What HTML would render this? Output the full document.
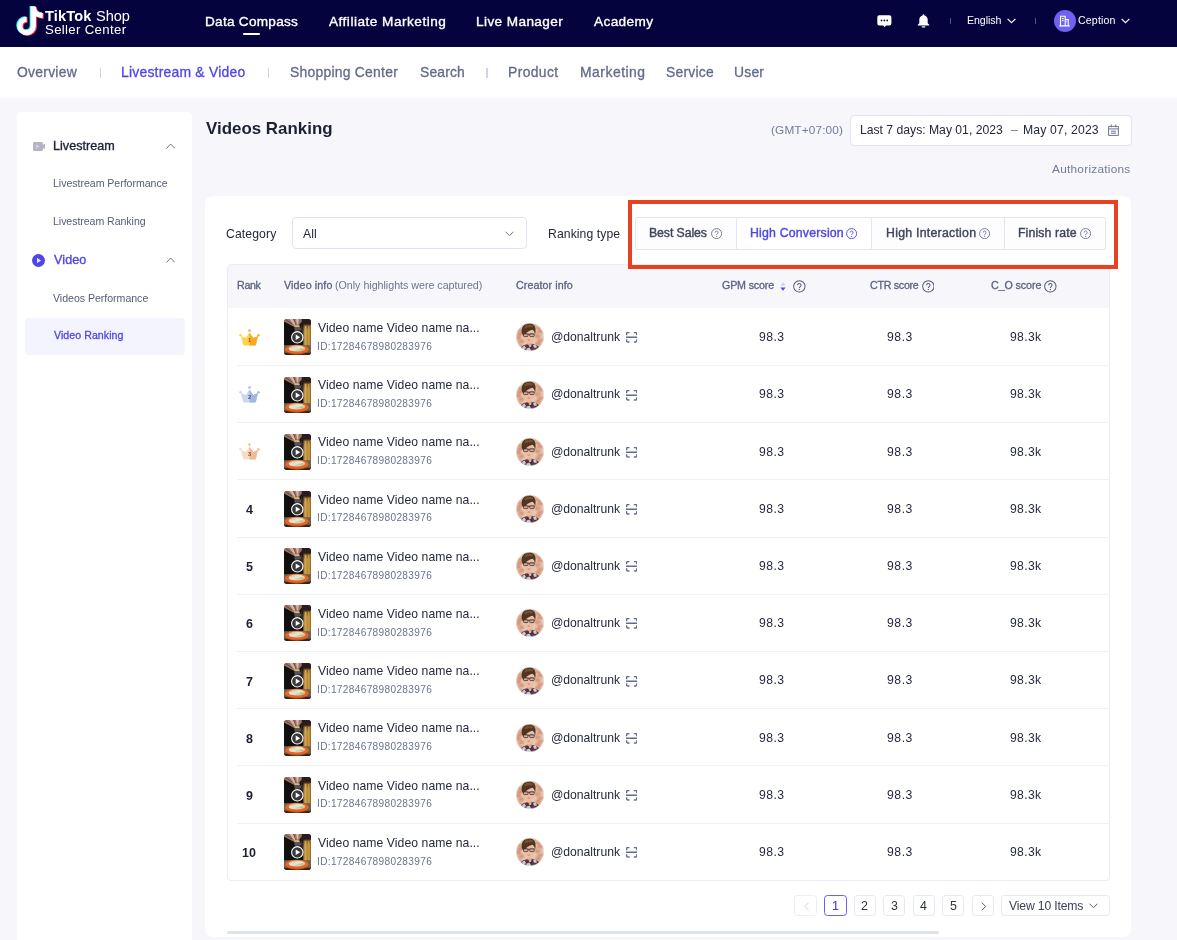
<!DOCTYPE html>
<html lang="en">
<head>
<meta charset="utf-8">
<title>Videos Ranking</title>
<style>
*{box-sizing:border-box;margin:0;padding:0}
html,body{width:1177px;height:940px;overflow:hidden}
body{background:#f6f6fb;font-family:"Liberation Sans",sans-serif;color:#25283a;position:relative}
.a{position:absolute}
.t{position:absolute;white-space:nowrap;line-height:20px;will-change:transform}
svg{display:block}
.pb{position:absolute;top:894.500px;width:22.300px;height:21.500px;border:1px solid #e6e8f2;border-radius:3.500px;background:#fff}
</style>
</head>
<body>
<div class="a" style="left:0;top:0;width:1177px;height:47.300px;background:#05033d"></div>
<svg class="a" style="left:15px;top:4px" width="32" height="34" viewBox="0 0 32 34">
<g fill="none" stroke-width="5.300">
<g stroke="#25f4ee" transform="translate(-1,-0.700)"><path d="M18.300 2.600V22a6.700 6.700 0 1 1-6.700-6.700"/><path d="M18.300 3.500c.6 4.800 4 7.800 9.400 8.200"/></g>
<g stroke="#fe2c55" transform="translate(1,0.700)"><path d="M18.300 2.600V22a6.700 6.700 0 1 1-6.700-6.700"/><path d="M18.300 3.500c.6 4.800 4 7.800 9.400 8.200"/></g>
<g stroke="#fff"><path d="M18.300 2.600V22a6.700 6.700 0 1 1-6.700-6.700"/><path d="M18.300 3.500c.6 4.800 4 7.800 9.400 8.200"/></g>
</g></svg>
<div class="t" style="left:45.14px;top:6px;font-size:14.6px;color:#fff;letter-spacing:0.13px;font-weight:bold;">TikTok</div>
<div class="t" style="left:95.84px;top:6px;font-size:14.6px;color:#fff;letter-spacing:-0.08px;">Shop</div>
<div class="t" style="left:44.71px;top:20px;font-size:13.2px;color:#fff;letter-spacing:0.34px;">Seller Center</div>
<div class="t" style="left:204.56px;top:12px;font-size:13.6px;color:#fff;letter-spacing:0.27px;-webkit-text-stroke:0.35px #fff;">Data Compass</div>
<div class="t" style="left:329.35px;top:12px;font-size:13.6px;color:#fff;letter-spacing:0.5px;-webkit-text-stroke:0.35px #fff;">Affiliate Marketing</div>
<div class="t" style="left:475.96px;top:12px;font-size:13.6px;color:#fff;letter-spacing:0.4px;-webkit-text-stroke:0.35px #fff;">Live Manager</div>
<div class="t" style="left:594.15px;top:12px;font-size:13.6px;color:#fff;letter-spacing:0.4px;-webkit-text-stroke:0.35px #fff;">Academy</div>
<div class="a" style="left:243.400px;top:32.700px;width:17px;height:2.200px;background:#fff;border-radius:1px"></div>
<svg class="a" style="left:877px;top:14.500px" width="15" height="13" viewBox="0 0 15 13"><path d="M2.300.3h10.100a2 2 0 0 1 2 2v6.200a2 2 0 0 1-2 2H9l-1.400 1.700L6.200 10.500H2.300a2 2 0 0 1-2-2V2.300a2 2 0 0 1 2-2z" fill="#fff"/><circle cx="4.500" cy="5.400" r=".85" fill="#05033d"/><circle cx="7.350" cy="5.400" r=".85" fill="#05033d"/><circle cx="10.200" cy="5.400" r=".85" fill="#05033d"/></svg>
<svg class="a" style="left:917px;top:13.800px" width="13" height="14" viewBox="0 0 13 14"><path d="M6.500.2c-.5 0-.9.400-.9.900v.4C3.600 2 2.300 3.700 2.300 5.800v3.400L.8 10.700v.8h11.400v-.8L10.700 9.200V5.800c0-2.100-1.300-3.800-3.300-4.300v-.4c0-.5-.4-.9-.9-.9z" fill="#fff"/><rect x="4.700" y="12.300" width="3.600" height="1.300" rx=".65" fill="#fff"/></svg>
<div class="a" style="left:949.700px;top:18.300px;width:1px;height:5.500px;background:#55537f"></div>
<div class="t" style="left:967.43px;top:10px;font-size:10.6px;color:#fff;letter-spacing:-0.05px;">English</div>
<svg class="a" style="left:1006.5px;top:18.300px" width="9" height="6" viewBox="0 0 9 6"><path d="M.6.800l3.900 3.900L8.400.8" fill="none" stroke="#fff" stroke-width="1.150"/></svg>
<div class="a" style="left:1034.700px;top:18.300px;width:1px;height:5.500px;background:#55537f"></div>
<div class="a" style="left:1053.600px;top:9.700px;width:22px;height:22px;border-radius:50%;background:#6f62f2"></div>
<svg class="a" style="left:1059px;top:15px" width="11" height="12" viewBox="0 0 11 12"><path d="M1.500 10.800V1.300h4.700v9.500M6.200 4.600h3v6.200M.3 10.900h10.400" fill="none" stroke="#fff" stroke-width="1.100"/><path d="M3 3.500h1.700M3 5.600h1.700M7.300 6.800h.8" stroke="#fff" stroke-width="1"/></svg>
<div class="t" style="left:1078.27px;top:10px;font-size:10.6px;color:#fff;letter-spacing:0.16px;">Ception</div>
<svg class="a" style="left:1120.7px;top:18.300px" width="9" height="6" viewBox="0 0 9 6"><path d="M.6.800l3.900 3.900L8.400.8" fill="none" stroke="#fff" stroke-width="1.150"/></svg>
<div class="a" style="left:0;top:47.300px;width:1177px;height:50.600px;background:#fff"></div>
<div class="t" style="left:17.3px;top:62px;font-size:13.9px;color:#616b8a;letter-spacing:0.26px;-webkit-text-stroke:0.3px #616b8a;">Overview</div>
<div class="t" style="left:121.41px;top:62px;font-size:13.9px;color:#4f46e5;letter-spacing:0.23px;-webkit-text-stroke:0.3px #4f46e5;">Livestream &amp; Video</div>
<div class="t" style="left:289.82px;top:62px;font-size:13.9px;color:#616b8a;letter-spacing:0.25px;-webkit-text-stroke:0.3px #616b8a;">Shopping Center</div>
<div class="t" style="left:420.12px;top:62px;font-size:13.9px;color:#616b8a;letter-spacing:0.14px;-webkit-text-stroke:0.3px #616b8a;">Search</div>
<div class="t" style="left:508.21px;top:62px;font-size:13.9px;color:#616b8a;letter-spacing:0.37px;-webkit-text-stroke:0.3px #616b8a;">Product</div>
<div class="t" style="left:579.51px;top:62px;font-size:13.9px;color:#616b8a;letter-spacing:0.51px;-webkit-text-stroke:0.3px #616b8a;">Marketing</div>
<div class="t" style="left:665.82px;top:62px;font-size:13.9px;color:#616b8a;letter-spacing:0.22px;-webkit-text-stroke:0.3px #616b8a;">Service</div>
<div class="t" style="left:734.48px;top:62px;font-size:13.9px;color:#616b8a;letter-spacing:0.22px;-webkit-text-stroke:0.3px #616b8a;">User</div>
<div class="a" style="left:99.8px;top:67.800px;width:1.400px;height:9.800px;background:#d2d5e2"></div>
<div class="a" style="left:267.6px;top:67.800px;width:1.400px;height:9.800px;background:#d2d5e2"></div>
<div class="a" style="left:486.3px;top:67.800px;width:1.400px;height:9.800px;background:#d2d5e2"></div>
<div class="a" style="left:17.300px;top:111.800px;width:174.500px;height:840px;background:#fff;border-radius:4px"></div>
<svg class="a" style="left:33.300px;top:141.500px" width="12.200" height="9" viewBox="0 0 12.200 9"><rect x="0" y="0" width="10" height="8.900" rx="1.500" fill="#b5b4c0"/><path d="M9.800 3l2.400-1.300v5.500L9.800 5.900z" fill="#b5b4c0"/><path d="M3.200 2.500v3.900l3.400-1.950z" fill="#d2d3ff"/></svg>
<div class="t" style="left:52.64px;top:136px;font-size:12.6px;color:#1f2235;letter-spacing:0.01px;-webkit-text-stroke:0.35px #1f2235;">Livestream</div>
<svg class="a" style="left:165.500px;top:143px" width="9.400" height="6.200" viewBox="0 0 9.400 6.200"><path d="M.5 5.500l4.200-4.500 4.200 4.500" fill="none" stroke="#6d7691" stroke-width="1"/></svg>
<div class="t" style="left:52.63px;top:173px;font-size:10.6px;color:#555d75;letter-spacing:-0.04px;">Livestream Performance</div>
<div class="t" style="left:52.63px;top:211px;font-size:10.6px;color:#555d75;letter-spacing:-0.06px;">Livestream Ranking</div>
<svg class="a" style="left:32.400px;top:253.800px" width="13" height="13" viewBox="0 0 13 13"><circle cx="6.500" cy="6.500" r="6.500" fill="#4f46e5"/><path d="M5 4.100v4.800l3.900-2.400z" fill="#fff"/><path d="M5 4.100v4.800l3.900-2.400z" fill="#d6d6fb" opacity=".6"/></svg>
<div class="t" style="left:53.62px;top:250px;font-size:12.6px;color:#4f46e5;letter-spacing:0.08px;-webkit-text-stroke:0.35px #4f46e5;">Video</div>
<svg class="a" style="left:165.500px;top:257.4px" width="9.400" height="6.200" viewBox="0 0 9.400 6.200"><path d="M.5 5.500l4.200-4.500 4.200 4.500" fill="none" stroke="#6d7691" stroke-width="1"/></svg>
<div class="t" style="left:53.46px;top:288px;font-size:10.6px;color:#555d75;letter-spacing:-0.03px;">Videos Performance</div>
<div class="a" style="left:25px;top:317.900px;width:159.500px;height:36.900px;background:#f4f4fe;border-radius:4px"></div>
<div class="t" style="left:53.61px;top:325px;font-size:10.6px;color:#4f46e5;letter-spacing:0.06px;-webkit-text-stroke:0.3px #4f46e5;">Video Ranking</div>
<div class="t" style="left:205.5px;top:119px;font-size:16.9px;color:#1d2033;letter-spacing:0.01px;font-weight:bold;">Videos Ranking</div>
<div class="t" style="left:771.47px;top:120px;font-size:11.8px;color:#717b9c;letter-spacing:0.14px;">(GMT+07:00)</div>
<div class="a" style="left:850px;top:115.200px;width:281.500px;height:31.300px;background:#fff;border:1px solid #e1e3ee;border-radius:4px"></div>
<div class="t" style="left:859.9px;top:120px;font-size:12.2px;color:#25283a;letter-spacing:-0.01px;">Last 7 days: May 01, 2023</div>
<div class="t" style="left:1010.5px;top:120px;font-size:12.2px;color:#6d7691;">–</div>
<div class="t" style="left:1023.4px;top:120px;font-size:12.2px;color:#25283a;letter-spacing:0.16px;">May 07, 2023</div>
<svg class="a" style="left:1108px;top:124.300px" width="11" height="12" viewBox="0 0 11 12"><path d="M.6 2.400h9.800v9H.6zM.6 4.900h9.800M3.200.5v2.800M7.800.5v2.800M3 7.200h5M3 9.200h5" fill="none" stroke="#6d7691" stroke-width="1"/></svg>
<div class="t" style="left:1052.28px;top:159px;font-size:11.8px;color:#717b9c;letter-spacing:0.27px;">Authorizations</div>
<div class="a" style="left:205.100px;top:196px;width:926.200px;height:740.800px;background:#fff;border-radius:8px"></div>
<div class="t" style="left:226.19px;top:224px;font-size:12.2px;color:#25283a;letter-spacing:0.12px;">Category</div>
<div class="a" style="left:292px;top:217.400px;width:235.400px;height:32.100px;background:#fff;border:1px solid #dfe3f3;border-radius:4px"></div>
<div class="t" style="left:302.88px;top:224px;font-size:12.2px;color:#25283a;letter-spacing:0.14px;">All</div>
<svg class="a" style="left:505.200px;top:231.300px" width="9" height="6" viewBox="0 0 9 6"><path d="M.5.700l4 4 4-4" fill="none" stroke="#6d7691" stroke-width="1"/></svg>
<div class="t" style="left:548.3px;top:224px;font-size:12.2px;color:#25283a;letter-spacing:0.09px;">Ranking type</div>
<div class="a" style="left:635px;top:217.200px;width:471px;height:32.400px;background:#fdfdff;border:1px solid #e2e5f3;border-radius:2px"></div>
<div class="a" style="left:1003.800px;top:218px;width:1px;height:31px;background:#e2e5f3"></div>
<div class="a" style="left:735.800px;top:217.200px;width:136.400px;height:32.400px;background:#fff;border:1px solid #e2e5f3;border-radius:3px"></div>
<div class="t" style="left:649.19px;top:223px;font-size:12.3px;color:#3f455c;letter-spacing:-0.09px;-webkit-text-stroke:0.4px #3f455c;">Best Sales</div>
<svg class="a" style="left:710.6px;top:227.9px" width="11.2" height="11.2" viewBox="0 0 12 12"><circle cx="6" cy="6" r="5.400" fill="none" stroke="#6d7691" stroke-width="1"/><path d="M4.400 4.900a1.600 1.600 0 1 1 2.500 1.300c-.6.400-.9.700-.9 1.300" fill="none" stroke="#6d7691" stroke-width="1"/><circle cx="6" cy="8.900" r=".65" fill="#6d7691"/></svg>
<div class="t" style="left:749.79px;top:223px;font-size:12.3px;color:#4f46e5;letter-spacing:0.2px;-webkit-text-stroke:0.4px #4f46e5;">High Conversion</div>
<svg class="a" style="left:846.3px;top:227.9px" width="11.2" height="11.2" viewBox="0 0 12 12"><circle cx="6" cy="6" r="5.400" fill="none" stroke="#4f46e5" stroke-width="1"/><path d="M4.400 4.900a1.600 1.600 0 1 1 2.500 1.300c-.6.400-.9.700-.9 1.300" fill="none" stroke="#4f46e5" stroke-width="1"/><circle cx="6" cy="8.900" r=".65" fill="#4f46e5"/></svg>
<div class="t" style="left:885.69px;top:223px;font-size:12.3px;color:#3f455c;letter-spacing:0.26px;-webkit-text-stroke:0.4px #3f455c;">High Interaction</div>
<svg class="a" style="left:978.7px;top:227.9px" width="11.2" height="11.2" viewBox="0 0 12 12"><circle cx="6" cy="6" r="5.400" fill="none" stroke="#6d7691" stroke-width="1"/><path d="M4.400 4.900a1.600 1.600 0 1 1 2.500 1.300c-.6.400-.9.700-.9 1.300" fill="none" stroke="#6d7691" stroke-width="1"/><circle cx="6" cy="8.900" r=".65" fill="#6d7691"/></svg>
<div class="t" style="left:1017.79px;top:223px;font-size:12.3px;color:#3f455c;letter-spacing:0.11px;-webkit-text-stroke:0.4px #3f455c;">Finish rate</div>
<svg class="a" style="left:1079.6px;top:227.9px" width="11.2" height="11.2" viewBox="0 0 12 12"><circle cx="6" cy="6" r="5.400" fill="none" stroke="#6d7691" stroke-width="1"/><path d="M4.400 4.900a1.600 1.600 0 1 1 2.500 1.300c-.6.400-.9.700-.9 1.300" fill="none" stroke="#6d7691" stroke-width="1"/><circle cx="6" cy="8.900" r=".65" fill="#6d7691"/></svg>
<div class="a" style="left:226.500px;top:264px;width:883.500px;height:617px;border:1px solid #ebecf4;border-radius:4px;overflow:hidden"><div style="height:43px;background:#f6f6fb"></div></div>
<div class="t" style="left:236.77px;top:275px;font-size:10.7px;color:#5a6380;letter-spacing:-0.34px;-webkit-text-stroke:0.3px #5a6380;">Rank</div>
<div class="t" style="left:284.21px;top:275px;font-size:10.7px;color:#5a6380;letter-spacing:0.11px;-webkit-text-stroke:0.3px #5a6380;">Video info</div>
<div class="t" style="left:334.74px;top:275px;font-size:10.7px;color:#6d7691;letter-spacing:-0.02px;">(Only highlights were captured)</div>
<div class="t" style="left:515.82px;top:275px;font-size:10.7px;color:#5a6380;letter-spacing:0.08px;-webkit-text-stroke:0.3px #5a6380;">Creator info</div>
<div class="t" style="left:721.82px;top:275px;font-size:10.7px;color:#5a6380;letter-spacing:-0.16px;-webkit-text-stroke:0.3px #5a6380;">GPM score</div>
<svg class="a" style="left:780.200px;top:281.800px" width="6" height="9" viewBox="0 0 6 9"><path d="M3 .3L5.600 3.500H.4z" fill="#cdd0e6"/><path d="M3 8.700L5.600 5.500H.4z" fill="#4f46e5"/></svg>
<svg class="a" style="left:793px;top:280px" width="12.7" height="12.7" viewBox="0 0 12 12"><circle cx="6" cy="6" r="5.400" fill="none" stroke="#555d75" stroke-width="0.95"/><path d="M4.400 4.900a1.600 1.600 0 1 1 2.500 1.300c-.6.400-.9.700-.9 1.300" fill="none" stroke="#555d75" stroke-width="0.95"/><circle cx="6" cy="8.900" r=".65" fill="#555d75"/></svg>
<div class="t" style="left:869.62px;top:275px;font-size:10.7px;color:#5a6380;letter-spacing:-0.29px;-webkit-text-stroke:0.3px #5a6380;">CTR score</div>
<svg class="a" style="left:921.6px;top:280px" width="12.7" height="12.7" viewBox="0 0 12 12"><circle cx="6" cy="6" r="5.400" fill="none" stroke="#555d75" stroke-width="0.95"/><path d="M4.400 4.900a1.600 1.600 0 1 1 2.500 1.300c-.6.400-.9.700-.9 1.300" fill="none" stroke="#555d75" stroke-width="0.95"/><circle cx="6" cy="8.900" r=".65" fill="#555d75"/></svg>
<div class="t" style="left:990.72px;top:275px;font-size:10.7px;color:#5a6380;letter-spacing:-0.09px;-webkit-text-stroke:0.3px #5a6380;">C_O score</div>
<svg class="a" style="left:1044px;top:280px" width="12.7" height="12.7" viewBox="0 0 12 12"><circle cx="6" cy="6" r="5.400" fill="none" stroke="#555d75" stroke-width="0.95"/><path d="M4.400 4.900a1.600 1.600 0 1 1 2.500 1.300c-.6.400-.9.700-.9 1.300" fill="none" stroke="#555d75" stroke-width="0.95"/><circle cx="6" cy="8.900" r=".65" fill="#555d75"/></svg>
<svg class="a" style="left:239.300px;top:328.7px;will-change:transform" width="21" height="16.800" viewBox="0 0 21 16.800"><circle cx="10.500" cy="1.600" r="1.250" fill="#f7a928"/><circle cx="1.500" cy="6.300" r="1.250" fill="#fdd544"/><circle cx="19.500" cy="6.300" r="1.200" fill="#f7a928"/><path d="M10.500 3.600l3.700 5.300 4.800-1.900-2.100 8.800a1 1 0 0 1-1 .8H5.100a1 1 0 0 1-1-.8L2 7l4.800 1.900z" fill="#fdd544"/><path d="M10.500 3.600l3.700 5.300 4.800-1.900-2.100 8.800a1 1 0 0 1-1 .8h-5.400z" fill="#f7a928"/><text x="10.500" y="13.400" font-family="Liberation Sans, sans-serif" font-size="5.600" font-weight="bold" text-anchor="middle" fill="#9c5a12">1</text></svg>
<svg class="a" style="left:283.700px;top:319.3px" width="27" height="36" viewBox="0 0 27 36"><defs><clipPath id="c0"><rect width="27" height="36" rx="3.200"/></clipPath><filter id="b0" x="-10%" y="-10%" width="120%" height="120%"><feGaussianBlur stdDeviation=".6"/></filter><linearGradient id="p0" x1="0" y1="0" x2="0" y2="1"><stop offset="0" stop-color="#6a4d22"/><stop offset=".25" stop-color="#b98c3c"/><stop offset="1" stop-color="#b28438"/></linearGradient></defs><g clip-path="url(#c0)"><rect width="27" height="36" fill="#120f0f"/><g filter="url(#b0)"><rect x="17.500" y="-1" width="10" height="7" fill="#2b1c1b"/><rect x="19.400" y="5.600" width="8.600" height="23.500" fill="url(#p0)"/><rect x="20.800" y="7" width="1.700" height="21" fill="#cfa552"/><rect x="24.100" y="7" width="1.300" height="21" fill="#c89a46"/><rect x="26" y="6" width="1.500" height="22" fill="#9c6f28"/><path d="M0 -1h17.800v3.400L13.600 8h-3.300L0 2.600z" fill="#9d7468"/><path d="M5.500 0H9l3 5-1.600 1.500zM12 0h2.800l-.5 4.500L13 6z" fill="#d9b5a6"/><path d="M2 1l6 4M9.500 0l2.500 6" stroke="#4a3430" stroke-width=".7" fill="none"/><path d="M10.300 6.300h5.200l.3 2.300h-5z" fill="#d9ba6a"/><path d="M10 8.600h7.500l1 2.600-7.500.8z" fill="#56515c"/><path d="M17 4l2.300 6.500-.8 5-1.500-5z" fill="#34302f"/><rect x="-1" y="26.200" width="29" height="11" fill="#676450"/><rect x="-1" y="33.800" width="29" height="3" fill="#33251a"/><ellipse cx="12.800" cy="30.800" rx="12" ry="4.900" fill="#c24a18"/><ellipse cx="12.800" cy="30.200" rx="11.800" ry="4.400" fill="#e5652b"/><ellipse cx="12.900" cy="29.500" rx="8.300" ry="3" fill="#d2d3ae"/><ellipse cx="9" cy="30.300" rx="3.600" ry="1.500" fill="#eadfd3"/><ellipse cx="15" cy="28.600" rx="4" ry="1.500" fill="#e3e6c6"/><ellipse cx="17.500" cy="30.300" rx="2.200" ry="1" fill="#b9c394"/></g><circle cx="13.300" cy="18.300" r="5.700" fill="rgba(72,72,76,.7)" stroke="#fff" stroke-width="1.100"/><path d="M11.700 15.600v5.400l4.500-2.700z" fill="#fff"/></g></svg>
<div class="t" style="left:317.75px;top:318px;font-size:12.2px;color:#262a3d;letter-spacing:0.06px;">Video name Video name na...</div>
<div class="t" style="left:316.87px;top:337px;font-size:10.1px;color:#6a7391;letter-spacing:0.34px;">ID:17284678980283976</div>
<svg class="a" style="left:516.300px;top:323.4px" width="28" height="28" viewBox="0 0 28 28"><defs><clipPath id="v0"><circle cx="14" cy="14" r="13.900"/></clipPath><filter id="w0" x="-10%" y="-10%" width="120%" height="120%"><feGaussianBlur stdDeviation=".55"/></filter><filter id="x0" x="-10%" y="-10%" width="120%" height="120%"><feGaussianBlur stdDeviation=".9"/></filter></defs><g clip-path="url(#v0)"><rect width="28" height="28" fill="#e6cdbc"/><g filter="url(#x0)"><path d="M0 6h5v2H0zM1 10h6v2H1zM0 14h5v2.200H0zM2 18h6v2H2zM0 22h6v2H0zM19 4h6v2h-6zM21 8h7v2h-7zM19 12h6v2h-6zM22 16h6v2h-6zM19 20h6v2h-6zM22 23.500h6v2h-6zM7 2h5v1.500H7zM16 1h5v1.600h-5z" fill="#d28560"/><path d="M3 8h4v2H3zM17.500 9.500h4v2h-4zM4 16h4v2H4zM19.500 14h3v2h-3zM20 18h5v2h-5zM1 12h4v2H1zM22 6h4v2h-4z" fill="#dda184"/></g><g filter="url(#w0)"><path d="M3.500 28c.6-4.300 3.500-6.600 9.700-7h2c5.800.4 8.600 2.700 9.300 7z" fill="#43333f"/><path d="M6 24l2.600-1.600 1.500 2.500L7.500 27zM17 22.300l2.800-.8 1.300 2.800-2.800 1zM10.500 25.500l3-1 2 3.500h-5zM21.500 25.500l2-.5 1 3h-3zM13 21.500l2.500.3-.5 2.200-2-.3z" fill="#cfc8d2"/><path d="M9 21.800l2 .5.300 2-2.300-.3zM16 24.500l2-.6.800 2-2 .8z" fill="#8a2b33"/><path d="M10.800 17h5.600v4L13.500 23l-2.700-2z" fill="#d9a587"/><ellipse cx="13.300" cy="13.700" rx="5.300" ry="7" fill="#ecbfa2"/><path d="M7.900 13.200c-.5-1-.9-1.600-1.700-2.200C4.500 7 6.200 2.500 10.300.8c4.200-1.500 8.200.3 8.900 3.700.7 2.300.3 5-.2 7-.3-2.300-1.200-4-2.600-4.700-3.200.6-6.200 2.300-8.500 6.400z" fill="#4f3422"/><path d="M8.500 3.500c2-2.200 5.500-2.800 8-1.200.8 1 .5 2-.5 2.300-2.500-.8-5-.5-7.200 1.200z" fill="#75502f"/><path d="M6.800 10.700h11.800v1H6.800z" fill="#3d3330"/><rect x="7.500" y="10.900" width="4.500" height="2.700" rx=".9" fill="#d5ab96" stroke="#3a3033" stroke-width=".8"/><rect x="13.700" y="10.900" width="4.500" height="2.700" rx=".9" fill="#d5ab96" stroke="#3a3033" stroke-width=".8"/><ellipse cx="12.800" cy="17" rx="1.500" ry=".6" fill="#d7707c"/></g></g><circle cx="14" cy="14" r="13.800" fill="none" stroke="#e9e6f3" stroke-width=".5"/></svg>
<div class="t" style="left:550.75px;top:327px;font-size:12.2px;color:#262a3d;letter-spacing:-0.03px;">@donaltrunk</div>
<svg class="a" style="left:625.700px;top:332.2px" width="11.400" height="10.600" viewBox="0 0 11.400 10.600"><path d="M.6 3.300V1.800A1.200 1.200 0 0 1 1.800.6h1.700M7.900.6h1.700a1.200 1.200 0 0 1 1.200 1.200v1.500M10.800 7.300v1.500a1.200 1.200 0 0 1-1.200 1.200H7.900M3.500 10H1.800A1.200 1.200 0 0 1 .6 8.800V7.300M0 5.300h11.400" fill="none" stroke="#616b8a" stroke-width="1.400"/></svg>
<div class="t" style="left:758.64px;top:327px;font-size:12.2px;color:#262a3d;letter-spacing:0.45px;">98.3</div>
<div class="t" style="left:887.09px;top:327px;font-size:12.2px;color:#262a3d;letter-spacing:0.55px;">98.3</div>
<div class="t" style="left:1009.84px;top:327px;font-size:12.2px;color:#262a3d;letter-spacing:0.32px;">98.3k</div>
<div class="a" style="left:237.200px;top:365px;width:872px;height:1.100px;background:#f1f1f7"></div>
<svg class="a" style="left:239.300px;top:385.9px;will-change:transform" width="21" height="16.800" viewBox="0 0 21 16.800"><circle cx="10.500" cy="1.600" r="1.250" fill="#a3b7db"/><circle cx="1.500" cy="6.300" r="1.250" fill="#c9d8f0"/><circle cx="19.500" cy="6.300" r="1.200" fill="#a3b7db"/><path d="M10.500 3.600l3.700 5.300 4.800-1.900-2.100 8.800a1 1 0 0 1-1 .8H5.100a1 1 0 0 1-1-.8L2 7l4.800 1.900z" fill="#c9d8f0"/><path d="M10.500 3.600l3.700 5.300 4.800-1.900-2.100 8.800a1 1 0 0 1-1 .8h-5.400z" fill="#a3b7db"/><text x="10.500" y="13.400" font-family="Liberation Sans, sans-serif" font-size="5.600" font-weight="bold" text-anchor="middle" fill="#3d5088">2</text></svg>
<svg class="a" style="left:283.700px;top:376.5px" width="27" height="36" viewBox="0 0 27 36"><defs><clipPath id="c1"><rect width="27" height="36" rx="3.200"/></clipPath><filter id="b1" x="-10%" y="-10%" width="120%" height="120%"><feGaussianBlur stdDeviation=".6"/></filter><linearGradient id="p1" x1="0" y1="0" x2="0" y2="1"><stop offset="0" stop-color="#6a4d22"/><stop offset=".25" stop-color="#b98c3c"/><stop offset="1" stop-color="#b28438"/></linearGradient></defs><g clip-path="url(#c1)"><rect width="27" height="36" fill="#120f0f"/><g filter="url(#b1)"><rect x="17.500" y="-1" width="10" height="7" fill="#2b1c1b"/><rect x="19.400" y="5.600" width="8.600" height="23.500" fill="url(#p1)"/><rect x="20.800" y="7" width="1.700" height="21" fill="#cfa552"/><rect x="24.100" y="7" width="1.300" height="21" fill="#c89a46"/><rect x="26" y="6" width="1.500" height="22" fill="#9c6f28"/><path d="M0 -1h17.800v3.400L13.600 8h-3.300L0 2.600z" fill="#9d7468"/><path d="M5.500 0H9l3 5-1.600 1.500zM12 0h2.800l-.5 4.500L13 6z" fill="#d9b5a6"/><path d="M2 1l6 4M9.500 0l2.500 6" stroke="#4a3430" stroke-width=".7" fill="none"/><path d="M10.300 6.300h5.200l.3 2.300h-5z" fill="#d9ba6a"/><path d="M10 8.600h7.500l1 2.600-7.500.8z" fill="#56515c"/><path d="M17 4l2.300 6.500-.8 5-1.500-5z" fill="#34302f"/><rect x="-1" y="26.200" width="29" height="11" fill="#676450"/><rect x="-1" y="33.800" width="29" height="3" fill="#33251a"/><ellipse cx="12.800" cy="30.800" rx="12" ry="4.900" fill="#c24a18"/><ellipse cx="12.800" cy="30.200" rx="11.800" ry="4.400" fill="#e5652b"/><ellipse cx="12.900" cy="29.500" rx="8.300" ry="3" fill="#d2d3ae"/><ellipse cx="9" cy="30.300" rx="3.600" ry="1.500" fill="#eadfd3"/><ellipse cx="15" cy="28.600" rx="4" ry="1.500" fill="#e3e6c6"/><ellipse cx="17.500" cy="30.300" rx="2.200" ry="1" fill="#b9c394"/></g><circle cx="13.300" cy="18.300" r="5.700" fill="rgba(72,72,76,.7)" stroke="#fff" stroke-width="1.100"/><path d="M11.700 15.600v5.400l4.500-2.700z" fill="#fff"/></g></svg>
<div class="t" style="left:317.75px;top:375px;font-size:12.2px;color:#262a3d;letter-spacing:0.06px;">Video name Video name na...</div>
<div class="t" style="left:316.87px;top:394px;font-size:10.1px;color:#6a7391;letter-spacing:0.34px;">ID:17284678980283976</div>
<svg class="a" style="left:516.300px;top:380.6px" width="28" height="28" viewBox="0 0 28 28"><defs><clipPath id="v1"><circle cx="14" cy="14" r="13.900"/></clipPath><filter id="w1" x="-10%" y="-10%" width="120%" height="120%"><feGaussianBlur stdDeviation=".55"/></filter><filter id="x1" x="-10%" y="-10%" width="120%" height="120%"><feGaussianBlur stdDeviation=".9"/></filter></defs><g clip-path="url(#v1)"><rect width="28" height="28" fill="#e6cdbc"/><g filter="url(#x1)"><path d="M0 6h5v2H0zM1 10h6v2H1zM0 14h5v2.200H0zM2 18h6v2H2zM0 22h6v2H0zM19 4h6v2h-6zM21 8h7v2h-7zM19 12h6v2h-6zM22 16h6v2h-6zM19 20h6v2h-6zM22 23.500h6v2h-6zM7 2h5v1.500H7zM16 1h5v1.600h-5z" fill="#d28560"/><path d="M3 8h4v2H3zM17.500 9.500h4v2h-4zM4 16h4v2H4zM19.500 14h3v2h-3zM20 18h5v2h-5zM1 12h4v2H1zM22 6h4v2h-4z" fill="#dda184"/></g><g filter="url(#w1)"><path d="M3.500 28c.6-4.300 3.500-6.600 9.700-7h2c5.800.4 8.600 2.700 9.300 7z" fill="#43333f"/><path d="M6 24l2.600-1.600 1.500 2.500L7.500 27zM17 22.300l2.800-.8 1.300 2.800-2.800 1zM10.500 25.500l3-1 2 3.500h-5zM21.500 25.500l2-.5 1 3h-3zM13 21.500l2.500.3-.5 2.200-2-.3z" fill="#cfc8d2"/><path d="M9 21.800l2 .5.300 2-2.300-.3zM16 24.500l2-.6.800 2-2 .8z" fill="#8a2b33"/><path d="M10.800 17h5.600v4L13.500 23l-2.700-2z" fill="#d9a587"/><ellipse cx="13.300" cy="13.700" rx="5.300" ry="7" fill="#ecbfa2"/><path d="M7.900 13.200c-.5-1-.9-1.600-1.700-2.200C4.500 7 6.200 2.500 10.300.8c4.200-1.500 8.200.3 8.900 3.700.7 2.300.3 5-.2 7-.3-2.300-1.200-4-2.600-4.700-3.200.6-6.200 2.300-8.500 6.400z" fill="#4f3422"/><path d="M8.500 3.500c2-2.200 5.500-2.800 8-1.200.8 1 .5 2-.5 2.300-2.500-.8-5-.5-7.200 1.200z" fill="#75502f"/><path d="M6.800 10.700h11.800v1H6.800z" fill="#3d3330"/><rect x="7.500" y="10.900" width="4.500" height="2.700" rx=".9" fill="#d5ab96" stroke="#3a3033" stroke-width=".8"/><rect x="13.700" y="10.900" width="4.500" height="2.700" rx=".9" fill="#d5ab96" stroke="#3a3033" stroke-width=".8"/><ellipse cx="12.800" cy="17" rx="1.500" ry=".6" fill="#d7707c"/></g></g><circle cx="14" cy="14" r="13.800" fill="none" stroke="#e9e6f3" stroke-width=".5"/></svg>
<div class="t" style="left:550.75px;top:384px;font-size:12.2px;color:#262a3d;letter-spacing:-0.03px;">@donaltrunk</div>
<svg class="a" style="left:625.700px;top:390.2px" width="11.400" height="10.600" viewBox="0 0 11.400 10.600"><path d="M.6 3.300V1.800A1.200 1.200 0 0 1 1.800.6h1.700M7.900.6h1.700a1.200 1.200 0 0 1 1.200 1.200v1.500M10.800 7.300v1.500a1.200 1.200 0 0 1-1.200 1.200H7.900M3.500 10H1.800A1.200 1.200 0 0 1 .6 8.800V7.300M0 5.300h11.400" fill="none" stroke="#616b8a" stroke-width="1.400"/></svg>
<div class="t" style="left:758.64px;top:384px;font-size:12.2px;color:#262a3d;letter-spacing:0.45px;">98.3</div>
<div class="t" style="left:887.09px;top:384px;font-size:12.2px;color:#262a3d;letter-spacing:0.55px;">98.3</div>
<div class="t" style="left:1009.84px;top:384px;font-size:12.2px;color:#262a3d;letter-spacing:0.32px;">98.3k</div>
<div class="a" style="left:237.200px;top:422.2px;width:872px;height:1.100px;background:#f1f1f7"></div>
<svg class="a" style="left:239.300px;top:443.1px;will-change:transform" width="21" height="16.800" viewBox="0 0 21 16.800"><circle cx="10.500" cy="1.600" r="1.250" fill="#f0bc98"/><circle cx="1.500" cy="6.300" r="1.250" fill="#f8dcc6"/><circle cx="19.500" cy="6.300" r="1.200" fill="#f0bc98"/><path d="M10.500 3.600l3.700 5.300 4.800-1.900-2.100 8.800a1 1 0 0 1-1 .8H5.100a1 1 0 0 1-1-.8L2 7l4.800 1.900z" fill="#f8dcc6"/><path d="M10.500 3.600l3.700 5.300 4.800-1.900-2.100 8.800a1 1 0 0 1-1 .8h-5.400z" fill="#f0bc98"/><text x="10.500" y="13.400" font-family="Liberation Sans, sans-serif" font-size="5.600" font-weight="bold" text-anchor="middle" fill="#8c4c2c">3</text></svg>
<svg class="a" style="left:283.700px;top:433.7px" width="27" height="36" viewBox="0 0 27 36"><defs><clipPath id="c2"><rect width="27" height="36" rx="3.200"/></clipPath><filter id="b2" x="-10%" y="-10%" width="120%" height="120%"><feGaussianBlur stdDeviation=".6"/></filter><linearGradient id="p2" x1="0" y1="0" x2="0" y2="1"><stop offset="0" stop-color="#6a4d22"/><stop offset=".25" stop-color="#b98c3c"/><stop offset="1" stop-color="#b28438"/></linearGradient></defs><g clip-path="url(#c2)"><rect width="27" height="36" fill="#120f0f"/><g filter="url(#b2)"><rect x="17.500" y="-1" width="10" height="7" fill="#2b1c1b"/><rect x="19.400" y="5.600" width="8.600" height="23.500" fill="url(#p2)"/><rect x="20.800" y="7" width="1.700" height="21" fill="#cfa552"/><rect x="24.100" y="7" width="1.300" height="21" fill="#c89a46"/><rect x="26" y="6" width="1.500" height="22" fill="#9c6f28"/><path d="M0 -1h17.800v3.400L13.600 8h-3.300L0 2.600z" fill="#9d7468"/><path d="M5.500 0H9l3 5-1.600 1.500zM12 0h2.800l-.5 4.500L13 6z" fill="#d9b5a6"/><path d="M2 1l6 4M9.500 0l2.500 6" stroke="#4a3430" stroke-width=".7" fill="none"/><path d="M10.300 6.300h5.200l.3 2.300h-5z" fill="#d9ba6a"/><path d="M10 8.600h7.500l1 2.600-7.500.8z" fill="#56515c"/><path d="M17 4l2.300 6.500-.8 5-1.500-5z" fill="#34302f"/><rect x="-1" y="26.200" width="29" height="11" fill="#676450"/><rect x="-1" y="33.800" width="29" height="3" fill="#33251a"/><ellipse cx="12.800" cy="30.800" rx="12" ry="4.900" fill="#c24a18"/><ellipse cx="12.800" cy="30.200" rx="11.800" ry="4.400" fill="#e5652b"/><ellipse cx="12.900" cy="29.500" rx="8.300" ry="3" fill="#d2d3ae"/><ellipse cx="9" cy="30.300" rx="3.600" ry="1.500" fill="#eadfd3"/><ellipse cx="15" cy="28.600" rx="4" ry="1.500" fill="#e3e6c6"/><ellipse cx="17.500" cy="30.300" rx="2.200" ry="1" fill="#b9c394"/></g><circle cx="13.300" cy="18.300" r="5.700" fill="rgba(72,72,76,.7)" stroke="#fff" stroke-width="1.100"/><path d="M11.700 15.600v5.400l4.500-2.700z" fill="#fff"/></g></svg>
<div class="t" style="left:317.75px;top:432px;font-size:12.2px;color:#262a3d;letter-spacing:0.06px;">Video name Video name na...</div>
<div class="t" style="left:316.87px;top:451px;font-size:10.1px;color:#6a7391;letter-spacing:0.34px;">ID:17284678980283976</div>
<svg class="a" style="left:516.300px;top:437.8px" width="28" height="28" viewBox="0 0 28 28"><defs><clipPath id="v2"><circle cx="14" cy="14" r="13.900"/></clipPath><filter id="w2" x="-10%" y="-10%" width="120%" height="120%"><feGaussianBlur stdDeviation=".55"/></filter><filter id="x2" x="-10%" y="-10%" width="120%" height="120%"><feGaussianBlur stdDeviation=".9"/></filter></defs><g clip-path="url(#v2)"><rect width="28" height="28" fill="#e6cdbc"/><g filter="url(#x2)"><path d="M0 6h5v2H0zM1 10h6v2H1zM0 14h5v2.200H0zM2 18h6v2H2zM0 22h6v2H0zM19 4h6v2h-6zM21 8h7v2h-7zM19 12h6v2h-6zM22 16h6v2h-6zM19 20h6v2h-6zM22 23.500h6v2h-6zM7 2h5v1.500H7zM16 1h5v1.600h-5z" fill="#d28560"/><path d="M3 8h4v2H3zM17.500 9.500h4v2h-4zM4 16h4v2H4zM19.500 14h3v2h-3zM20 18h5v2h-5zM1 12h4v2H1zM22 6h4v2h-4z" fill="#dda184"/></g><g filter="url(#w2)"><path d="M3.500 28c.6-4.300 3.500-6.600 9.700-7h2c5.800.4 8.600 2.700 9.300 7z" fill="#43333f"/><path d="M6 24l2.600-1.600 1.500 2.500L7.500 27zM17 22.300l2.800-.8 1.300 2.800-2.800 1zM10.500 25.500l3-1 2 3.500h-5zM21.500 25.500l2-.5 1 3h-3zM13 21.500l2.500.3-.5 2.200-2-.3z" fill="#cfc8d2"/><path d="M9 21.800l2 .5.300 2-2.300-.3zM16 24.500l2-.6.800 2-2 .8z" fill="#8a2b33"/><path d="M10.800 17h5.600v4L13.500 23l-2.700-2z" fill="#d9a587"/><ellipse cx="13.300" cy="13.700" rx="5.300" ry="7" fill="#ecbfa2"/><path d="M7.900 13.200c-.5-1-.9-1.600-1.700-2.200C4.500 7 6.200 2.500 10.300.8c4.200-1.500 8.200.3 8.900 3.700.7 2.300.3 5-.2 7-.3-2.300-1.200-4-2.600-4.700-3.200.6-6.200 2.300-8.500 6.400z" fill="#4f3422"/><path d="M8.500 3.500c2-2.200 5.500-2.800 8-1.200.8 1 .5 2-.5 2.300-2.500-.8-5-.5-7.200 1.200z" fill="#75502f"/><path d="M6.800 10.700h11.800v1H6.800z" fill="#3d3330"/><rect x="7.500" y="10.900" width="4.500" height="2.700" rx=".9" fill="#d5ab96" stroke="#3a3033" stroke-width=".8"/><rect x="13.700" y="10.900" width="4.500" height="2.700" rx=".9" fill="#d5ab96" stroke="#3a3033" stroke-width=".8"/><ellipse cx="12.800" cy="17" rx="1.500" ry=".6" fill="#d7707c"/></g></g><circle cx="14" cy="14" r="13.800" fill="none" stroke="#e9e6f3" stroke-width=".5"/></svg>
<div class="t" style="left:550.75px;top:442px;font-size:12.2px;color:#262a3d;letter-spacing:-0.03px;">@donaltrunk</div>
<svg class="a" style="left:625.700px;top:447.2px" width="11.400" height="10.600" viewBox="0 0 11.400 10.600"><path d="M.6 3.300V1.800A1.200 1.200 0 0 1 1.800.6h1.700M7.900.6h1.700a1.200 1.200 0 0 1 1.200 1.200v1.500M10.800 7.300v1.500a1.200 1.200 0 0 1-1.200 1.200H7.900M3.500 10H1.800A1.200 1.200 0 0 1 .6 8.800V7.300M0 5.300h11.400" fill="none" stroke="#616b8a" stroke-width="1.400"/></svg>
<div class="t" style="left:758.64px;top:442px;font-size:12.2px;color:#262a3d;letter-spacing:0.45px;">98.3</div>
<div class="t" style="left:887.09px;top:442px;font-size:12.2px;color:#262a3d;letter-spacing:0.55px;">98.3</div>
<div class="t" style="left:1009.84px;top:442px;font-size:12.2px;color:#262a3d;letter-spacing:0.32px;">98.3k</div>
<div class="a" style="left:237.200px;top:479.4px;width:872px;height:1.100px;background:#f1f1f7"></div>
<div class="t" style="left:245.66px;top:500px;font-size:12.5px;color:#1d2033;font-weight:bold;">4</div>
<svg class="a" style="left:283.700px;top:490.9px" width="27" height="36" viewBox="0 0 27 36"><defs><clipPath id="c3"><rect width="27" height="36" rx="3.200"/></clipPath><filter id="b3" x="-10%" y="-10%" width="120%" height="120%"><feGaussianBlur stdDeviation=".6"/></filter><linearGradient id="p3" x1="0" y1="0" x2="0" y2="1"><stop offset="0" stop-color="#6a4d22"/><stop offset=".25" stop-color="#b98c3c"/><stop offset="1" stop-color="#b28438"/></linearGradient></defs><g clip-path="url(#c3)"><rect width="27" height="36" fill="#120f0f"/><g filter="url(#b3)"><rect x="17.500" y="-1" width="10" height="7" fill="#2b1c1b"/><rect x="19.400" y="5.600" width="8.600" height="23.500" fill="url(#p3)"/><rect x="20.800" y="7" width="1.700" height="21" fill="#cfa552"/><rect x="24.100" y="7" width="1.300" height="21" fill="#c89a46"/><rect x="26" y="6" width="1.500" height="22" fill="#9c6f28"/><path d="M0 -1h17.800v3.400L13.600 8h-3.300L0 2.600z" fill="#9d7468"/><path d="M5.500 0H9l3 5-1.600 1.500zM12 0h2.800l-.5 4.500L13 6z" fill="#d9b5a6"/><path d="M2 1l6 4M9.500 0l2.500 6" stroke="#4a3430" stroke-width=".7" fill="none"/><path d="M10.300 6.300h5.200l.3 2.300h-5z" fill="#d9ba6a"/><path d="M10 8.600h7.500l1 2.600-7.500.8z" fill="#56515c"/><path d="M17 4l2.300 6.500-.8 5-1.500-5z" fill="#34302f"/><rect x="-1" y="26.200" width="29" height="11" fill="#676450"/><rect x="-1" y="33.800" width="29" height="3" fill="#33251a"/><ellipse cx="12.800" cy="30.800" rx="12" ry="4.900" fill="#c24a18"/><ellipse cx="12.800" cy="30.200" rx="11.800" ry="4.400" fill="#e5652b"/><ellipse cx="12.900" cy="29.500" rx="8.300" ry="3" fill="#d2d3ae"/><ellipse cx="9" cy="30.300" rx="3.600" ry="1.500" fill="#eadfd3"/><ellipse cx="15" cy="28.600" rx="4" ry="1.500" fill="#e3e6c6"/><ellipse cx="17.500" cy="30.300" rx="2.200" ry="1" fill="#b9c394"/></g><circle cx="13.300" cy="18.300" r="5.700" fill="rgba(72,72,76,.7)" stroke="#fff" stroke-width="1.100"/><path d="M11.700 15.600v5.400l4.500-2.700z" fill="#fff"/></g></svg>
<div class="t" style="left:317.75px;top:490px;font-size:12.2px;color:#262a3d;letter-spacing:0.06px;">Video name Video name na...</div>
<div class="t" style="left:316.87px;top:508px;font-size:10.1px;color:#6a7391;letter-spacing:0.34px;">ID:17284678980283976</div>
<svg class="a" style="left:516.300px;top:495px" width="28" height="28" viewBox="0 0 28 28"><defs><clipPath id="v3"><circle cx="14" cy="14" r="13.900"/></clipPath><filter id="w3" x="-10%" y="-10%" width="120%" height="120%"><feGaussianBlur stdDeviation=".55"/></filter><filter id="x3" x="-10%" y="-10%" width="120%" height="120%"><feGaussianBlur stdDeviation=".9"/></filter></defs><g clip-path="url(#v3)"><rect width="28" height="28" fill="#e6cdbc"/><g filter="url(#x3)"><path d="M0 6h5v2H0zM1 10h6v2H1zM0 14h5v2.200H0zM2 18h6v2H2zM0 22h6v2H0zM19 4h6v2h-6zM21 8h7v2h-7zM19 12h6v2h-6zM22 16h6v2h-6zM19 20h6v2h-6zM22 23.500h6v2h-6zM7 2h5v1.500H7zM16 1h5v1.600h-5z" fill="#d28560"/><path d="M3 8h4v2H3zM17.500 9.500h4v2h-4zM4 16h4v2H4zM19.500 14h3v2h-3zM20 18h5v2h-5zM1 12h4v2H1zM22 6h4v2h-4z" fill="#dda184"/></g><g filter="url(#w3)"><path d="M3.500 28c.6-4.300 3.500-6.600 9.700-7h2c5.800.4 8.600 2.700 9.300 7z" fill="#43333f"/><path d="M6 24l2.600-1.600 1.500 2.500L7.500 27zM17 22.300l2.800-.8 1.300 2.800-2.800 1zM10.500 25.500l3-1 2 3.500h-5zM21.500 25.500l2-.5 1 3h-3zM13 21.500l2.500.3-.5 2.200-2-.3z" fill="#cfc8d2"/><path d="M9 21.800l2 .5.300 2-2.300-.3zM16 24.500l2-.6.800 2-2 .8z" fill="#8a2b33"/><path d="M10.800 17h5.600v4L13.500 23l-2.700-2z" fill="#d9a587"/><ellipse cx="13.300" cy="13.700" rx="5.300" ry="7" fill="#ecbfa2"/><path d="M7.900 13.200c-.5-1-.9-1.600-1.700-2.200C4.500 7 6.200 2.500 10.300.8c4.200-1.500 8.200.3 8.900 3.700.7 2.300.3 5-.2 7-.3-2.300-1.200-4-2.600-4.700-3.200.6-6.200 2.300-8.500 6.400z" fill="#4f3422"/><path d="M8.500 3.500c2-2.200 5.500-2.800 8-1.200.8 1 .5 2-.5 2.300-2.500-.8-5-.5-7.200 1.200z" fill="#75502f"/><path d="M6.800 10.700h11.800v1H6.800z" fill="#3d3330"/><rect x="7.500" y="10.900" width="4.500" height="2.700" rx=".9" fill="#d5ab96" stroke="#3a3033" stroke-width=".8"/><rect x="13.700" y="10.900" width="4.500" height="2.700" rx=".9" fill="#d5ab96" stroke="#3a3033" stroke-width=".8"/><ellipse cx="12.800" cy="17" rx="1.500" ry=".6" fill="#d7707c"/></g></g><circle cx="14" cy="14" r="13.800" fill="none" stroke="#e9e6f3" stroke-width=".5"/></svg>
<div class="t" style="left:550.75px;top:499px;font-size:12.2px;color:#262a3d;letter-spacing:-0.03px;">@donaltrunk</div>
<svg class="a" style="left:625.700px;top:504.2px" width="11.400" height="10.600" viewBox="0 0 11.400 10.600"><path d="M.6 3.300V1.800A1.200 1.200 0 0 1 1.800.6h1.700M7.900.6h1.700a1.200 1.200 0 0 1 1.200 1.200v1.500M10.800 7.300v1.500a1.200 1.200 0 0 1-1.200 1.200H7.900M3.500 10H1.800A1.200 1.200 0 0 1 .6 8.800V7.300M0 5.300h11.400" fill="none" stroke="#616b8a" stroke-width="1.400"/></svg>
<div class="t" style="left:758.64px;top:499px;font-size:12.2px;color:#262a3d;letter-spacing:0.45px;">98.3</div>
<div class="t" style="left:887.09px;top:499px;font-size:12.2px;color:#262a3d;letter-spacing:0.55px;">98.3</div>
<div class="t" style="left:1009.84px;top:499px;font-size:12.2px;color:#262a3d;letter-spacing:0.32px;">98.3k</div>
<div class="a" style="left:237.200px;top:536.6px;width:872px;height:1.100px;background:#f1f1f7"></div>
<div class="t" style="left:245.71px;top:557px;font-size:12.5px;color:#1d2033;font-weight:bold;">5</div>
<svg class="a" style="left:283.700px;top:548.1px" width="27" height="36" viewBox="0 0 27 36"><defs><clipPath id="c4"><rect width="27" height="36" rx="3.200"/></clipPath><filter id="b4" x="-10%" y="-10%" width="120%" height="120%"><feGaussianBlur stdDeviation=".6"/></filter><linearGradient id="p4" x1="0" y1="0" x2="0" y2="1"><stop offset="0" stop-color="#6a4d22"/><stop offset=".25" stop-color="#b98c3c"/><stop offset="1" stop-color="#b28438"/></linearGradient></defs><g clip-path="url(#c4)"><rect width="27" height="36" fill="#120f0f"/><g filter="url(#b4)"><rect x="17.500" y="-1" width="10" height="7" fill="#2b1c1b"/><rect x="19.400" y="5.600" width="8.600" height="23.500" fill="url(#p4)"/><rect x="20.800" y="7" width="1.700" height="21" fill="#cfa552"/><rect x="24.100" y="7" width="1.300" height="21" fill="#c89a46"/><rect x="26" y="6" width="1.500" height="22" fill="#9c6f28"/><path d="M0 -1h17.800v3.400L13.600 8h-3.300L0 2.600z" fill="#9d7468"/><path d="M5.500 0H9l3 5-1.600 1.500zM12 0h2.800l-.5 4.500L13 6z" fill="#d9b5a6"/><path d="M2 1l6 4M9.500 0l2.500 6" stroke="#4a3430" stroke-width=".7" fill="none"/><path d="M10.300 6.300h5.200l.3 2.300h-5z" fill="#d9ba6a"/><path d="M10 8.600h7.500l1 2.600-7.500.8z" fill="#56515c"/><path d="M17 4l2.300 6.500-.8 5-1.500-5z" fill="#34302f"/><rect x="-1" y="26.200" width="29" height="11" fill="#676450"/><rect x="-1" y="33.800" width="29" height="3" fill="#33251a"/><ellipse cx="12.800" cy="30.800" rx="12" ry="4.900" fill="#c24a18"/><ellipse cx="12.800" cy="30.200" rx="11.800" ry="4.400" fill="#e5652b"/><ellipse cx="12.900" cy="29.500" rx="8.300" ry="3" fill="#d2d3ae"/><ellipse cx="9" cy="30.300" rx="3.600" ry="1.500" fill="#eadfd3"/><ellipse cx="15" cy="28.600" rx="4" ry="1.500" fill="#e3e6c6"/><ellipse cx="17.500" cy="30.300" rx="2.200" ry="1" fill="#b9c394"/></g><circle cx="13.300" cy="18.300" r="5.700" fill="rgba(72,72,76,.7)" stroke="#fff" stroke-width="1.100"/><path d="M11.700 15.600v5.400l4.500-2.700z" fill="#fff"/></g></svg>
<div class="t" style="left:317.75px;top:547px;font-size:12.2px;color:#262a3d;letter-spacing:0.06px;">Video name Video name na...</div>
<div class="t" style="left:316.87px;top:566px;font-size:10.1px;color:#6a7391;letter-spacing:0.34px;">ID:17284678980283976</div>
<svg class="a" style="left:516.300px;top:552.2px" width="28" height="28" viewBox="0 0 28 28"><defs><clipPath id="v4"><circle cx="14" cy="14" r="13.900"/></clipPath><filter id="w4" x="-10%" y="-10%" width="120%" height="120%"><feGaussianBlur stdDeviation=".55"/></filter><filter id="x4" x="-10%" y="-10%" width="120%" height="120%"><feGaussianBlur stdDeviation=".9"/></filter></defs><g clip-path="url(#v4)"><rect width="28" height="28" fill="#e6cdbc"/><g filter="url(#x4)"><path d="M0 6h5v2H0zM1 10h6v2H1zM0 14h5v2.200H0zM2 18h6v2H2zM0 22h6v2H0zM19 4h6v2h-6zM21 8h7v2h-7zM19 12h6v2h-6zM22 16h6v2h-6zM19 20h6v2h-6zM22 23.500h6v2h-6zM7 2h5v1.500H7zM16 1h5v1.600h-5z" fill="#d28560"/><path d="M3 8h4v2H3zM17.500 9.500h4v2h-4zM4 16h4v2H4zM19.500 14h3v2h-3zM20 18h5v2h-5zM1 12h4v2H1zM22 6h4v2h-4z" fill="#dda184"/></g><g filter="url(#w4)"><path d="M3.500 28c.6-4.300 3.500-6.600 9.700-7h2c5.800.4 8.600 2.700 9.300 7z" fill="#43333f"/><path d="M6 24l2.600-1.600 1.500 2.500L7.500 27zM17 22.300l2.800-.8 1.300 2.800-2.800 1zM10.500 25.500l3-1 2 3.500h-5zM21.500 25.500l2-.5 1 3h-3zM13 21.500l2.500.3-.5 2.200-2-.3z" fill="#cfc8d2"/><path d="M9 21.800l2 .5.300 2-2.300-.3zM16 24.500l2-.6.800 2-2 .8z" fill="#8a2b33"/><path d="M10.800 17h5.600v4L13.500 23l-2.700-2z" fill="#d9a587"/><ellipse cx="13.300" cy="13.700" rx="5.300" ry="7" fill="#ecbfa2"/><path d="M7.900 13.200c-.5-1-.9-1.600-1.700-2.200C4.500 7 6.200 2.500 10.300.8c4.200-1.500 8.200.3 8.900 3.700.7 2.300.3 5-.2 7-.3-2.300-1.200-4-2.600-4.700-3.200.6-6.200 2.300-8.500 6.400z" fill="#4f3422"/><path d="M8.500 3.500c2-2.200 5.500-2.800 8-1.200.8 1 .5 2-.5 2.300-2.500-.8-5-.5-7.200 1.200z" fill="#75502f"/><path d="M6.800 10.700h11.800v1H6.800z" fill="#3d3330"/><rect x="7.500" y="10.900" width="4.500" height="2.700" rx=".9" fill="#d5ab96" stroke="#3a3033" stroke-width=".8"/><rect x="13.700" y="10.900" width="4.500" height="2.700" rx=".9" fill="#d5ab96" stroke="#3a3033" stroke-width=".8"/><ellipse cx="12.800" cy="17" rx="1.500" ry=".6" fill="#d7707c"/></g></g><circle cx="14" cy="14" r="13.800" fill="none" stroke="#e9e6f3" stroke-width=".5"/></svg>
<div class="t" style="left:550.75px;top:556px;font-size:12.2px;color:#262a3d;letter-spacing:-0.03px;">@donaltrunk</div>
<svg class="a" style="left:625.700px;top:561.2px" width="11.400" height="10.600" viewBox="0 0 11.400 10.600"><path d="M.6 3.300V1.800A1.200 1.200 0 0 1 1.800.6h1.700M7.900.6h1.700a1.200 1.200 0 0 1 1.200 1.200v1.500M10.800 7.300v1.500a1.200 1.200 0 0 1-1.200 1.200H7.900M3.500 10H1.800A1.200 1.200 0 0 1 .6 8.800V7.300M0 5.300h11.400" fill="none" stroke="#616b8a" stroke-width="1.400"/></svg>
<div class="t" style="left:758.64px;top:556px;font-size:12.2px;color:#262a3d;letter-spacing:0.45px;">98.3</div>
<div class="t" style="left:887.09px;top:556px;font-size:12.2px;color:#262a3d;letter-spacing:0.55px;">98.3</div>
<div class="t" style="left:1009.84px;top:556px;font-size:12.2px;color:#262a3d;letter-spacing:0.32px;">98.3k</div>
<div class="a" style="left:237.200px;top:593.8px;width:872px;height:1.100px;background:#f1f1f7"></div>
<div class="t" style="left:245.72px;top:614px;font-size:12.5px;color:#1d2033;font-weight:bold;">6</div>
<svg class="a" style="left:283.700px;top:605.3px" width="27" height="36" viewBox="0 0 27 36"><defs><clipPath id="c5"><rect width="27" height="36" rx="3.200"/></clipPath><filter id="b5" x="-10%" y="-10%" width="120%" height="120%"><feGaussianBlur stdDeviation=".6"/></filter><linearGradient id="p5" x1="0" y1="0" x2="0" y2="1"><stop offset="0" stop-color="#6a4d22"/><stop offset=".25" stop-color="#b98c3c"/><stop offset="1" stop-color="#b28438"/></linearGradient></defs><g clip-path="url(#c5)"><rect width="27" height="36" fill="#120f0f"/><g filter="url(#b5)"><rect x="17.500" y="-1" width="10" height="7" fill="#2b1c1b"/><rect x="19.400" y="5.600" width="8.600" height="23.500" fill="url(#p5)"/><rect x="20.800" y="7" width="1.700" height="21" fill="#cfa552"/><rect x="24.100" y="7" width="1.300" height="21" fill="#c89a46"/><rect x="26" y="6" width="1.500" height="22" fill="#9c6f28"/><path d="M0 -1h17.800v3.400L13.600 8h-3.300L0 2.600z" fill="#9d7468"/><path d="M5.500 0H9l3 5-1.600 1.500zM12 0h2.800l-.5 4.500L13 6z" fill="#d9b5a6"/><path d="M2 1l6 4M9.500 0l2.500 6" stroke="#4a3430" stroke-width=".7" fill="none"/><path d="M10.300 6.300h5.200l.3 2.300h-5z" fill="#d9ba6a"/><path d="M10 8.600h7.500l1 2.600-7.500.8z" fill="#56515c"/><path d="M17 4l2.300 6.500-.8 5-1.500-5z" fill="#34302f"/><rect x="-1" y="26.200" width="29" height="11" fill="#676450"/><rect x="-1" y="33.800" width="29" height="3" fill="#33251a"/><ellipse cx="12.800" cy="30.800" rx="12" ry="4.900" fill="#c24a18"/><ellipse cx="12.800" cy="30.200" rx="11.800" ry="4.400" fill="#e5652b"/><ellipse cx="12.900" cy="29.500" rx="8.300" ry="3" fill="#d2d3ae"/><ellipse cx="9" cy="30.300" rx="3.600" ry="1.500" fill="#eadfd3"/><ellipse cx="15" cy="28.600" rx="4" ry="1.500" fill="#e3e6c6"/><ellipse cx="17.500" cy="30.300" rx="2.200" ry="1" fill="#b9c394"/></g><circle cx="13.300" cy="18.300" r="5.700" fill="rgba(72,72,76,.7)" stroke="#fff" stroke-width="1.100"/><path d="M11.700 15.600v5.400l4.500-2.700z" fill="#fff"/></g></svg>
<div class="t" style="left:317.75px;top:604px;font-size:12.2px;color:#262a3d;letter-spacing:0.06px;">Video name Video name na...</div>
<div class="t" style="left:316.87px;top:623px;font-size:10.1px;color:#6a7391;letter-spacing:0.34px;">ID:17284678980283976</div>
<svg class="a" style="left:516.300px;top:609.4px" width="28" height="28" viewBox="0 0 28 28"><defs><clipPath id="v5"><circle cx="14" cy="14" r="13.900"/></clipPath><filter id="w5" x="-10%" y="-10%" width="120%" height="120%"><feGaussianBlur stdDeviation=".55"/></filter><filter id="x5" x="-10%" y="-10%" width="120%" height="120%"><feGaussianBlur stdDeviation=".9"/></filter></defs><g clip-path="url(#v5)"><rect width="28" height="28" fill="#e6cdbc"/><g filter="url(#x5)"><path d="M0 6h5v2H0zM1 10h6v2H1zM0 14h5v2.200H0zM2 18h6v2H2zM0 22h6v2H0zM19 4h6v2h-6zM21 8h7v2h-7zM19 12h6v2h-6zM22 16h6v2h-6zM19 20h6v2h-6zM22 23.500h6v2h-6zM7 2h5v1.500H7zM16 1h5v1.600h-5z" fill="#d28560"/><path d="M3 8h4v2H3zM17.500 9.500h4v2h-4zM4 16h4v2H4zM19.500 14h3v2h-3zM20 18h5v2h-5zM1 12h4v2H1zM22 6h4v2h-4z" fill="#dda184"/></g><g filter="url(#w5)"><path d="M3.500 28c.6-4.300 3.500-6.600 9.700-7h2c5.800.4 8.600 2.700 9.300 7z" fill="#43333f"/><path d="M6 24l2.600-1.600 1.500 2.500L7.500 27zM17 22.300l2.800-.8 1.300 2.800-2.800 1zM10.500 25.500l3-1 2 3.500h-5zM21.500 25.500l2-.5 1 3h-3zM13 21.500l2.500.3-.5 2.200-2-.3z" fill="#cfc8d2"/><path d="M9 21.800l2 .5.300 2-2.300-.3zM16 24.500l2-.6.800 2-2 .8z" fill="#8a2b33"/><path d="M10.800 17h5.600v4L13.500 23l-2.700-2z" fill="#d9a587"/><ellipse cx="13.300" cy="13.700" rx="5.300" ry="7" fill="#ecbfa2"/><path d="M7.900 13.200c-.5-1-.9-1.600-1.700-2.200C4.500 7 6.200 2.500 10.300.8c4.200-1.500 8.200.3 8.900 3.700.7 2.300.3 5-.2 7-.3-2.300-1.200-4-2.600-4.700-3.200.6-6.200 2.300-8.500 6.400z" fill="#4f3422"/><path d="M8.500 3.500c2-2.200 5.500-2.800 8-1.200.8 1 .5 2-.5 2.300-2.500-.8-5-.5-7.200 1.200z" fill="#75502f"/><path d="M6.800 10.700h11.800v1H6.800z" fill="#3d3330"/><rect x="7.500" y="10.900" width="4.500" height="2.700" rx=".9" fill="#d5ab96" stroke="#3a3033" stroke-width=".8"/><rect x="13.700" y="10.900" width="4.500" height="2.700" rx=".9" fill="#d5ab96" stroke="#3a3033" stroke-width=".8"/><ellipse cx="12.800" cy="17" rx="1.500" ry=".6" fill="#d7707c"/></g></g><circle cx="14" cy="14" r="13.800" fill="none" stroke="#e9e6f3" stroke-width=".5"/></svg>
<div class="t" style="left:550.75px;top:613px;font-size:12.2px;color:#262a3d;letter-spacing:-0.03px;">@donaltrunk</div>
<svg class="a" style="left:625.700px;top:618.2px" width="11.400" height="10.600" viewBox="0 0 11.400 10.600"><path d="M.6 3.300V1.800A1.200 1.200 0 0 1 1.800.6h1.700M7.900.6h1.700a1.200 1.200 0 0 1 1.200 1.200v1.500M10.800 7.300v1.500a1.200 1.200 0 0 1-1.200 1.200H7.900M3.500 10H1.800A1.200 1.200 0 0 1 .6 8.800V7.300M0 5.300h11.400" fill="none" stroke="#616b8a" stroke-width="1.400"/></svg>
<div class="t" style="left:758.64px;top:613px;font-size:12.2px;color:#262a3d;letter-spacing:0.45px;">98.3</div>
<div class="t" style="left:887.09px;top:613px;font-size:12.2px;color:#262a3d;letter-spacing:0.55px;">98.3</div>
<div class="t" style="left:1009.84px;top:613px;font-size:12.2px;color:#262a3d;letter-spacing:0.32px;">98.3k</div>
<div class="a" style="left:237.200px;top:651px;width:872px;height:1.100px;background:#f1f1f7"></div>
<div class="t" style="left:245.73px;top:672px;font-size:12.5px;color:#1d2033;font-weight:bold;">7</div>
<svg class="a" style="left:283.700px;top:662.5px" width="27" height="36" viewBox="0 0 27 36"><defs><clipPath id="c6"><rect width="27" height="36" rx="3.200"/></clipPath><filter id="b6" x="-10%" y="-10%" width="120%" height="120%"><feGaussianBlur stdDeviation=".6"/></filter><linearGradient id="p6" x1="0" y1="0" x2="0" y2="1"><stop offset="0" stop-color="#6a4d22"/><stop offset=".25" stop-color="#b98c3c"/><stop offset="1" stop-color="#b28438"/></linearGradient></defs><g clip-path="url(#c6)"><rect width="27" height="36" fill="#120f0f"/><g filter="url(#b6)"><rect x="17.500" y="-1" width="10" height="7" fill="#2b1c1b"/><rect x="19.400" y="5.600" width="8.600" height="23.500" fill="url(#p6)"/><rect x="20.800" y="7" width="1.700" height="21" fill="#cfa552"/><rect x="24.100" y="7" width="1.300" height="21" fill="#c89a46"/><rect x="26" y="6" width="1.500" height="22" fill="#9c6f28"/><path d="M0 -1h17.800v3.400L13.600 8h-3.300L0 2.600z" fill="#9d7468"/><path d="M5.500 0H9l3 5-1.600 1.500zM12 0h2.800l-.5 4.500L13 6z" fill="#d9b5a6"/><path d="M2 1l6 4M9.500 0l2.500 6" stroke="#4a3430" stroke-width=".7" fill="none"/><path d="M10.300 6.300h5.200l.3 2.300h-5z" fill="#d9ba6a"/><path d="M10 8.600h7.500l1 2.600-7.500.8z" fill="#56515c"/><path d="M17 4l2.300 6.500-.8 5-1.500-5z" fill="#34302f"/><rect x="-1" y="26.200" width="29" height="11" fill="#676450"/><rect x="-1" y="33.800" width="29" height="3" fill="#33251a"/><ellipse cx="12.800" cy="30.800" rx="12" ry="4.900" fill="#c24a18"/><ellipse cx="12.800" cy="30.200" rx="11.800" ry="4.400" fill="#e5652b"/><ellipse cx="12.900" cy="29.500" rx="8.300" ry="3" fill="#d2d3ae"/><ellipse cx="9" cy="30.300" rx="3.600" ry="1.500" fill="#eadfd3"/><ellipse cx="15" cy="28.600" rx="4" ry="1.500" fill="#e3e6c6"/><ellipse cx="17.500" cy="30.300" rx="2.200" ry="1" fill="#b9c394"/></g><circle cx="13.300" cy="18.300" r="5.700" fill="rgba(72,72,76,.7)" stroke="#fff" stroke-width="1.100"/><path d="M11.700 15.600v5.400l4.500-2.700z" fill="#fff"/></g></svg>
<div class="t" style="left:317.75px;top:661px;font-size:12.2px;color:#262a3d;letter-spacing:0.06px;">Video name Video name na...</div>
<div class="t" style="left:316.87px;top:680px;font-size:10.1px;color:#6a7391;letter-spacing:0.34px;">ID:17284678980283976</div>
<svg class="a" style="left:516.300px;top:666.6px" width="28" height="28" viewBox="0 0 28 28"><defs><clipPath id="v6"><circle cx="14" cy="14" r="13.900"/></clipPath><filter id="w6" x="-10%" y="-10%" width="120%" height="120%"><feGaussianBlur stdDeviation=".55"/></filter><filter id="x6" x="-10%" y="-10%" width="120%" height="120%"><feGaussianBlur stdDeviation=".9"/></filter></defs><g clip-path="url(#v6)"><rect width="28" height="28" fill="#e6cdbc"/><g filter="url(#x6)"><path d="M0 6h5v2H0zM1 10h6v2H1zM0 14h5v2.200H0zM2 18h6v2H2zM0 22h6v2H0zM19 4h6v2h-6zM21 8h7v2h-7zM19 12h6v2h-6zM22 16h6v2h-6zM19 20h6v2h-6zM22 23.500h6v2h-6zM7 2h5v1.500H7zM16 1h5v1.600h-5z" fill="#d28560"/><path d="M3 8h4v2H3zM17.500 9.500h4v2h-4zM4 16h4v2H4zM19.500 14h3v2h-3zM20 18h5v2h-5zM1 12h4v2H1zM22 6h4v2h-4z" fill="#dda184"/></g><g filter="url(#w6)"><path d="M3.500 28c.6-4.300 3.500-6.600 9.700-7h2c5.800.4 8.600 2.700 9.300 7z" fill="#43333f"/><path d="M6 24l2.600-1.600 1.500 2.500L7.500 27zM17 22.300l2.800-.8 1.300 2.800-2.800 1zM10.500 25.500l3-1 2 3.500h-5zM21.500 25.500l2-.5 1 3h-3zM13 21.500l2.500.3-.5 2.200-2-.3z" fill="#cfc8d2"/><path d="M9 21.800l2 .5.300 2-2.300-.3zM16 24.500l2-.6.800 2-2 .8z" fill="#8a2b33"/><path d="M10.800 17h5.600v4L13.500 23l-2.700-2z" fill="#d9a587"/><ellipse cx="13.300" cy="13.700" rx="5.300" ry="7" fill="#ecbfa2"/><path d="M7.900 13.200c-.5-1-.9-1.600-1.700-2.200C4.500 7 6.200 2.500 10.300.8c4.200-1.500 8.200.3 8.900 3.700.7 2.300.3 5-.2 7-.3-2.300-1.200-4-2.600-4.700-3.200.6-6.200 2.300-8.500 6.400z" fill="#4f3422"/><path d="M8.500 3.500c2-2.200 5.500-2.800 8-1.200.8 1 .5 2-.5 2.300-2.500-.8-5-.5-7.200 1.200z" fill="#75502f"/><path d="M6.800 10.700h11.800v1H6.800z" fill="#3d3330"/><rect x="7.500" y="10.900" width="4.500" height="2.700" rx=".9" fill="#d5ab96" stroke="#3a3033" stroke-width=".8"/><rect x="13.700" y="10.900" width="4.500" height="2.700" rx=".9" fill="#d5ab96" stroke="#3a3033" stroke-width=".8"/><ellipse cx="12.800" cy="17" rx="1.500" ry=".6" fill="#d7707c"/></g></g><circle cx="14" cy="14" r="13.800" fill="none" stroke="#e9e6f3" stroke-width=".5"/></svg>
<div class="t" style="left:550.75px;top:670px;font-size:12.2px;color:#262a3d;letter-spacing:-0.03px;">@donaltrunk</div>
<svg class="a" style="left:625.700px;top:676.2px" width="11.400" height="10.600" viewBox="0 0 11.400 10.600"><path d="M.6 3.300V1.800A1.200 1.200 0 0 1 1.800.6h1.700M7.900.6h1.700a1.200 1.200 0 0 1 1.200 1.200v1.500M10.800 7.300v1.500a1.200 1.200 0 0 1-1.200 1.200H7.900M3.500 10H1.800A1.200 1.200 0 0 1 .6 8.800V7.300M0 5.300h11.400" fill="none" stroke="#616b8a" stroke-width="1.400"/></svg>
<div class="t" style="left:758.64px;top:670px;font-size:12.2px;color:#262a3d;letter-spacing:0.45px;">98.3</div>
<div class="t" style="left:887.09px;top:670px;font-size:12.2px;color:#262a3d;letter-spacing:0.55px;">98.3</div>
<div class="t" style="left:1009.84px;top:670px;font-size:12.2px;color:#262a3d;letter-spacing:0.32px;">98.3k</div>
<div class="a" style="left:237.200px;top:708.2px;width:872px;height:1.100px;background:#f1f1f7"></div>
<div class="t" style="left:245.72px;top:729px;font-size:12.5px;color:#1d2033;font-weight:bold;">8</div>
<svg class="a" style="left:283.700px;top:719.7px" width="27" height="36" viewBox="0 0 27 36"><defs><clipPath id="c7"><rect width="27" height="36" rx="3.200"/></clipPath><filter id="b7" x="-10%" y="-10%" width="120%" height="120%"><feGaussianBlur stdDeviation=".6"/></filter><linearGradient id="p7" x1="0" y1="0" x2="0" y2="1"><stop offset="0" stop-color="#6a4d22"/><stop offset=".25" stop-color="#b98c3c"/><stop offset="1" stop-color="#b28438"/></linearGradient></defs><g clip-path="url(#c7)"><rect width="27" height="36" fill="#120f0f"/><g filter="url(#b7)"><rect x="17.500" y="-1" width="10" height="7" fill="#2b1c1b"/><rect x="19.400" y="5.600" width="8.600" height="23.500" fill="url(#p7)"/><rect x="20.800" y="7" width="1.700" height="21" fill="#cfa552"/><rect x="24.100" y="7" width="1.300" height="21" fill="#c89a46"/><rect x="26" y="6" width="1.500" height="22" fill="#9c6f28"/><path d="M0 -1h17.800v3.400L13.600 8h-3.300L0 2.600z" fill="#9d7468"/><path d="M5.500 0H9l3 5-1.600 1.500zM12 0h2.800l-.5 4.500L13 6z" fill="#d9b5a6"/><path d="M2 1l6 4M9.500 0l2.500 6" stroke="#4a3430" stroke-width=".7" fill="none"/><path d="M10.300 6.300h5.200l.3 2.300h-5z" fill="#d9ba6a"/><path d="M10 8.600h7.500l1 2.600-7.500.8z" fill="#56515c"/><path d="M17 4l2.300 6.500-.8 5-1.500-5z" fill="#34302f"/><rect x="-1" y="26.200" width="29" height="11" fill="#676450"/><rect x="-1" y="33.800" width="29" height="3" fill="#33251a"/><ellipse cx="12.800" cy="30.800" rx="12" ry="4.900" fill="#c24a18"/><ellipse cx="12.800" cy="30.200" rx="11.800" ry="4.400" fill="#e5652b"/><ellipse cx="12.900" cy="29.500" rx="8.300" ry="3" fill="#d2d3ae"/><ellipse cx="9" cy="30.300" rx="3.600" ry="1.500" fill="#eadfd3"/><ellipse cx="15" cy="28.600" rx="4" ry="1.500" fill="#e3e6c6"/><ellipse cx="17.500" cy="30.300" rx="2.200" ry="1" fill="#b9c394"/></g><circle cx="13.300" cy="18.300" r="5.700" fill="rgba(72,72,76,.7)" stroke="#fff" stroke-width="1.100"/><path d="M11.700 15.600v5.400l4.500-2.700z" fill="#fff"/></g></svg>
<div class="t" style="left:317.75px;top:718px;font-size:12.2px;color:#262a3d;letter-spacing:0.06px;">Video name Video name na...</div>
<div class="t" style="left:316.87px;top:737px;font-size:10.1px;color:#6a7391;letter-spacing:0.34px;">ID:17284678980283976</div>
<svg class="a" style="left:516.300px;top:723.8px" width="28" height="28" viewBox="0 0 28 28"><defs><clipPath id="v7"><circle cx="14" cy="14" r="13.900"/></clipPath><filter id="w7" x="-10%" y="-10%" width="120%" height="120%"><feGaussianBlur stdDeviation=".55"/></filter><filter id="x7" x="-10%" y="-10%" width="120%" height="120%"><feGaussianBlur stdDeviation=".9"/></filter></defs><g clip-path="url(#v7)"><rect width="28" height="28" fill="#e6cdbc"/><g filter="url(#x7)"><path d="M0 6h5v2H0zM1 10h6v2H1zM0 14h5v2.200H0zM2 18h6v2H2zM0 22h6v2H0zM19 4h6v2h-6zM21 8h7v2h-7zM19 12h6v2h-6zM22 16h6v2h-6zM19 20h6v2h-6zM22 23.500h6v2h-6zM7 2h5v1.500H7zM16 1h5v1.600h-5z" fill="#d28560"/><path d="M3 8h4v2H3zM17.500 9.500h4v2h-4zM4 16h4v2H4zM19.500 14h3v2h-3zM20 18h5v2h-5zM1 12h4v2H1zM22 6h4v2h-4z" fill="#dda184"/></g><g filter="url(#w7)"><path d="M3.500 28c.6-4.300 3.500-6.600 9.700-7h2c5.800.4 8.600 2.700 9.300 7z" fill="#43333f"/><path d="M6 24l2.600-1.600 1.500 2.500L7.500 27zM17 22.300l2.800-.8 1.300 2.800-2.800 1zM10.500 25.500l3-1 2 3.500h-5zM21.500 25.500l2-.5 1 3h-3zM13 21.500l2.500.3-.5 2.200-2-.3z" fill="#cfc8d2"/><path d="M9 21.800l2 .5.300 2-2.300-.3zM16 24.500l2-.6.800 2-2 .8z" fill="#8a2b33"/><path d="M10.800 17h5.600v4L13.500 23l-2.700-2z" fill="#d9a587"/><ellipse cx="13.300" cy="13.700" rx="5.300" ry="7" fill="#ecbfa2"/><path d="M7.900 13.200c-.5-1-.9-1.600-1.700-2.200C4.500 7 6.200 2.500 10.300.8c4.200-1.500 8.200.3 8.900 3.700.7 2.300.3 5-.2 7-.3-2.300-1.200-4-2.600-4.700-3.200.6-6.200 2.300-8.500 6.400z" fill="#4f3422"/><path d="M8.500 3.500c2-2.200 5.500-2.800 8-1.200.8 1 .5 2-.5 2.300-2.500-.8-5-.5-7.200 1.200z" fill="#75502f"/><path d="M6.800 10.700h11.800v1H6.800z" fill="#3d3330"/><rect x="7.500" y="10.900" width="4.500" height="2.700" rx=".9" fill="#d5ab96" stroke="#3a3033" stroke-width=".8"/><rect x="13.700" y="10.900" width="4.500" height="2.700" rx=".9" fill="#d5ab96" stroke="#3a3033" stroke-width=".8"/><ellipse cx="12.800" cy="17" rx="1.500" ry=".6" fill="#d7707c"/></g></g><circle cx="14" cy="14" r="13.800" fill="none" stroke="#e9e6f3" stroke-width=".5"/></svg>
<div class="t" style="left:550.75px;top:728px;font-size:12.2px;color:#262a3d;letter-spacing:-0.03px;">@donaltrunk</div>
<svg class="a" style="left:625.700px;top:733.2px" width="11.400" height="10.600" viewBox="0 0 11.400 10.600"><path d="M.6 3.300V1.800A1.200 1.200 0 0 1 1.800.6h1.700M7.900.6h1.700a1.200 1.200 0 0 1 1.200 1.200v1.500M10.800 7.300v1.500a1.200 1.200 0 0 1-1.200 1.200H7.900M3.500 10H1.800A1.200 1.200 0 0 1 .6 8.800V7.300M0 5.300h11.400" fill="none" stroke="#616b8a" stroke-width="1.400"/></svg>
<div class="t" style="left:758.64px;top:728px;font-size:12.2px;color:#262a3d;letter-spacing:0.45px;">98.3</div>
<div class="t" style="left:887.09px;top:728px;font-size:12.2px;color:#262a3d;letter-spacing:0.55px;">98.3</div>
<div class="t" style="left:1009.84px;top:728px;font-size:12.2px;color:#262a3d;letter-spacing:0.32px;">98.3k</div>
<div class="a" style="left:237.200px;top:765.4px;width:872px;height:1.100px;background:#f1f1f7"></div>
<div class="t" style="left:245.74px;top:786px;font-size:12.5px;color:#1d2033;font-weight:bold;">9</div>
<svg class="a" style="left:283.700px;top:776.9px" width="27" height="36" viewBox="0 0 27 36"><defs><clipPath id="c8"><rect width="27" height="36" rx="3.200"/></clipPath><filter id="b8" x="-10%" y="-10%" width="120%" height="120%"><feGaussianBlur stdDeviation=".6"/></filter><linearGradient id="p8" x1="0" y1="0" x2="0" y2="1"><stop offset="0" stop-color="#6a4d22"/><stop offset=".25" stop-color="#b98c3c"/><stop offset="1" stop-color="#b28438"/></linearGradient></defs><g clip-path="url(#c8)"><rect width="27" height="36" fill="#120f0f"/><g filter="url(#b8)"><rect x="17.500" y="-1" width="10" height="7" fill="#2b1c1b"/><rect x="19.400" y="5.600" width="8.600" height="23.500" fill="url(#p8)"/><rect x="20.800" y="7" width="1.700" height="21" fill="#cfa552"/><rect x="24.100" y="7" width="1.300" height="21" fill="#c89a46"/><rect x="26" y="6" width="1.500" height="22" fill="#9c6f28"/><path d="M0 -1h17.800v3.400L13.600 8h-3.300L0 2.600z" fill="#9d7468"/><path d="M5.500 0H9l3 5-1.600 1.500zM12 0h2.800l-.5 4.500L13 6z" fill="#d9b5a6"/><path d="M2 1l6 4M9.500 0l2.500 6" stroke="#4a3430" stroke-width=".7" fill="none"/><path d="M10.300 6.300h5.200l.3 2.300h-5z" fill="#d9ba6a"/><path d="M10 8.600h7.500l1 2.600-7.500.8z" fill="#56515c"/><path d="M17 4l2.300 6.500-.8 5-1.500-5z" fill="#34302f"/><rect x="-1" y="26.200" width="29" height="11" fill="#676450"/><rect x="-1" y="33.800" width="29" height="3" fill="#33251a"/><ellipse cx="12.800" cy="30.800" rx="12" ry="4.900" fill="#c24a18"/><ellipse cx="12.800" cy="30.200" rx="11.800" ry="4.400" fill="#e5652b"/><ellipse cx="12.900" cy="29.500" rx="8.300" ry="3" fill="#d2d3ae"/><ellipse cx="9" cy="30.300" rx="3.600" ry="1.500" fill="#eadfd3"/><ellipse cx="15" cy="28.600" rx="4" ry="1.500" fill="#e3e6c6"/><ellipse cx="17.500" cy="30.300" rx="2.200" ry="1" fill="#b9c394"/></g><circle cx="13.300" cy="18.300" r="5.700" fill="rgba(72,72,76,.7)" stroke="#fff" stroke-width="1.100"/><path d="M11.700 15.600v5.400l4.500-2.700z" fill="#fff"/></g></svg>
<div class="t" style="left:317.75px;top:776px;font-size:12.2px;color:#262a3d;letter-spacing:0.06px;">Video name Video name na...</div>
<div class="t" style="left:316.87px;top:794px;font-size:10.1px;color:#6a7391;letter-spacing:0.34px;">ID:17284678980283976</div>
<svg class="a" style="left:516.300px;top:781px" width="28" height="28" viewBox="0 0 28 28"><defs><clipPath id="v8"><circle cx="14" cy="14" r="13.900"/></clipPath><filter id="w8" x="-10%" y="-10%" width="120%" height="120%"><feGaussianBlur stdDeviation=".55"/></filter><filter id="x8" x="-10%" y="-10%" width="120%" height="120%"><feGaussianBlur stdDeviation=".9"/></filter></defs><g clip-path="url(#v8)"><rect width="28" height="28" fill="#e6cdbc"/><g filter="url(#x8)"><path d="M0 6h5v2H0zM1 10h6v2H1zM0 14h5v2.200H0zM2 18h6v2H2zM0 22h6v2H0zM19 4h6v2h-6zM21 8h7v2h-7zM19 12h6v2h-6zM22 16h6v2h-6zM19 20h6v2h-6zM22 23.500h6v2h-6zM7 2h5v1.500H7zM16 1h5v1.600h-5z" fill="#d28560"/><path d="M3 8h4v2H3zM17.500 9.500h4v2h-4zM4 16h4v2H4zM19.500 14h3v2h-3zM20 18h5v2h-5zM1 12h4v2H1zM22 6h4v2h-4z" fill="#dda184"/></g><g filter="url(#w8)"><path d="M3.500 28c.6-4.300 3.500-6.600 9.700-7h2c5.800.4 8.600 2.700 9.300 7z" fill="#43333f"/><path d="M6 24l2.600-1.600 1.500 2.500L7.500 27zM17 22.300l2.800-.8 1.300 2.800-2.800 1zM10.500 25.500l3-1 2 3.500h-5zM21.500 25.500l2-.5 1 3h-3zM13 21.500l2.500.3-.5 2.200-2-.3z" fill="#cfc8d2"/><path d="M9 21.800l2 .5.300 2-2.300-.3zM16 24.500l2-.6.800 2-2 .8z" fill="#8a2b33"/><path d="M10.800 17h5.600v4L13.500 23l-2.700-2z" fill="#d9a587"/><ellipse cx="13.300" cy="13.700" rx="5.300" ry="7" fill="#ecbfa2"/><path d="M7.900 13.200c-.5-1-.9-1.600-1.700-2.200C4.500 7 6.200 2.500 10.300.8c4.200-1.500 8.200.3 8.900 3.700.7 2.300.3 5-.2 7-.3-2.300-1.200-4-2.600-4.700-3.200.6-6.200 2.300-8.500 6.400z" fill="#4f3422"/><path d="M8.500 3.500c2-2.200 5.500-2.800 8-1.200.8 1 .5 2-.5 2.300-2.500-.8-5-.5-7.200 1.200z" fill="#75502f"/><path d="M6.800 10.700h11.800v1H6.800z" fill="#3d3330"/><rect x="7.500" y="10.900" width="4.500" height="2.700" rx=".9" fill="#d5ab96" stroke="#3a3033" stroke-width=".8"/><rect x="13.700" y="10.900" width="4.500" height="2.700" rx=".9" fill="#d5ab96" stroke="#3a3033" stroke-width=".8"/><ellipse cx="12.800" cy="17" rx="1.500" ry=".6" fill="#d7707c"/></g></g><circle cx="14" cy="14" r="13.800" fill="none" stroke="#e9e6f3" stroke-width=".5"/></svg>
<div class="t" style="left:550.75px;top:785px;font-size:12.2px;color:#262a3d;letter-spacing:-0.03px;">@donaltrunk</div>
<svg class="a" style="left:625.700px;top:790.2px" width="11.400" height="10.600" viewBox="0 0 11.400 10.600"><path d="M.6 3.300V1.800A1.200 1.200 0 0 1 1.800.6h1.700M7.900.6h1.700a1.200 1.200 0 0 1 1.200 1.200v1.500M10.800 7.300v1.500a1.200 1.200 0 0 1-1.200 1.200H7.900M3.500 10H1.800A1.200 1.200 0 0 1 .6 8.800V7.300M0 5.300h11.400" fill="none" stroke="#616b8a" stroke-width="1.400"/></svg>
<div class="t" style="left:758.64px;top:785px;font-size:12.2px;color:#262a3d;letter-spacing:0.45px;">98.3</div>
<div class="t" style="left:887.09px;top:785px;font-size:12.2px;color:#262a3d;letter-spacing:0.55px;">98.3</div>
<div class="t" style="left:1009.84px;top:785px;font-size:12.2px;color:#262a3d;letter-spacing:0.32px;">98.3k</div>
<div class="a" style="left:237.200px;top:822.6px;width:872px;height:1.100px;background:#f1f1f7"></div>
<div class="t" style="left:241.61px;top:843px;font-size:12.5px;color:#1d2033;font-weight:bold;">10</div>
<svg class="a" style="left:283.700px;top:834.1px" width="27" height="36" viewBox="0 0 27 36"><defs><clipPath id="c9"><rect width="27" height="36" rx="3.200"/></clipPath><filter id="b9" x="-10%" y="-10%" width="120%" height="120%"><feGaussianBlur stdDeviation=".6"/></filter><linearGradient id="p9" x1="0" y1="0" x2="0" y2="1"><stop offset="0" stop-color="#6a4d22"/><stop offset=".25" stop-color="#b98c3c"/><stop offset="1" stop-color="#b28438"/></linearGradient></defs><g clip-path="url(#c9)"><rect width="27" height="36" fill="#120f0f"/><g filter="url(#b9)"><rect x="17.500" y="-1" width="10" height="7" fill="#2b1c1b"/><rect x="19.400" y="5.600" width="8.600" height="23.500" fill="url(#p9)"/><rect x="20.800" y="7" width="1.700" height="21" fill="#cfa552"/><rect x="24.100" y="7" width="1.300" height="21" fill="#c89a46"/><rect x="26" y="6" width="1.500" height="22" fill="#9c6f28"/><path d="M0 -1h17.800v3.400L13.600 8h-3.300L0 2.600z" fill="#9d7468"/><path d="M5.500 0H9l3 5-1.600 1.500zM12 0h2.800l-.5 4.500L13 6z" fill="#d9b5a6"/><path d="M2 1l6 4M9.500 0l2.500 6" stroke="#4a3430" stroke-width=".7" fill="none"/><path d="M10.300 6.300h5.200l.3 2.300h-5z" fill="#d9ba6a"/><path d="M10 8.600h7.500l1 2.600-7.500.8z" fill="#56515c"/><path d="M17 4l2.300 6.500-.8 5-1.500-5z" fill="#34302f"/><rect x="-1" y="26.200" width="29" height="11" fill="#676450"/><rect x="-1" y="33.800" width="29" height="3" fill="#33251a"/><ellipse cx="12.800" cy="30.800" rx="12" ry="4.900" fill="#c24a18"/><ellipse cx="12.800" cy="30.200" rx="11.800" ry="4.400" fill="#e5652b"/><ellipse cx="12.900" cy="29.500" rx="8.300" ry="3" fill="#d2d3ae"/><ellipse cx="9" cy="30.300" rx="3.600" ry="1.500" fill="#eadfd3"/><ellipse cx="15" cy="28.600" rx="4" ry="1.500" fill="#e3e6c6"/><ellipse cx="17.500" cy="30.300" rx="2.200" ry="1" fill="#b9c394"/></g><circle cx="13.300" cy="18.300" r="5.700" fill="rgba(72,72,76,.7)" stroke="#fff" stroke-width="1.100"/><path d="M11.700 15.600v5.400l4.500-2.700z" fill="#fff"/></g></svg>
<div class="t" style="left:317.75px;top:833px;font-size:12.2px;color:#262a3d;letter-spacing:0.06px;">Video name Video name na...</div>
<div class="t" style="left:316.87px;top:852px;font-size:10.1px;color:#6a7391;letter-spacing:0.34px;">ID:17284678980283976</div>
<svg class="a" style="left:516.300px;top:838.2px" width="28" height="28" viewBox="0 0 28 28"><defs><clipPath id="v9"><circle cx="14" cy="14" r="13.900"/></clipPath><filter id="w9" x="-10%" y="-10%" width="120%" height="120%"><feGaussianBlur stdDeviation=".55"/></filter><filter id="x9" x="-10%" y="-10%" width="120%" height="120%"><feGaussianBlur stdDeviation=".9"/></filter></defs><g clip-path="url(#v9)"><rect width="28" height="28" fill="#e6cdbc"/><g filter="url(#x9)"><path d="M0 6h5v2H0zM1 10h6v2H1zM0 14h5v2.200H0zM2 18h6v2H2zM0 22h6v2H0zM19 4h6v2h-6zM21 8h7v2h-7zM19 12h6v2h-6zM22 16h6v2h-6zM19 20h6v2h-6zM22 23.500h6v2h-6zM7 2h5v1.500H7zM16 1h5v1.600h-5z" fill="#d28560"/><path d="M3 8h4v2H3zM17.500 9.500h4v2h-4zM4 16h4v2H4zM19.500 14h3v2h-3zM20 18h5v2h-5zM1 12h4v2H1zM22 6h4v2h-4z" fill="#dda184"/></g><g filter="url(#w9)"><path d="M3.500 28c.6-4.300 3.500-6.600 9.700-7h2c5.800.4 8.600 2.700 9.300 7z" fill="#43333f"/><path d="M6 24l2.600-1.600 1.500 2.500L7.500 27zM17 22.300l2.800-.8 1.300 2.800-2.800 1zM10.500 25.500l3-1 2 3.500h-5zM21.500 25.500l2-.5 1 3h-3zM13 21.500l2.500.3-.5 2.200-2-.3z" fill="#cfc8d2"/><path d="M9 21.800l2 .5.300 2-2.300-.3zM16 24.500l2-.6.800 2-2 .8z" fill="#8a2b33"/><path d="M10.800 17h5.600v4L13.500 23l-2.700-2z" fill="#d9a587"/><ellipse cx="13.300" cy="13.700" rx="5.300" ry="7" fill="#ecbfa2"/><path d="M7.900 13.200c-.5-1-.9-1.600-1.700-2.200C4.500 7 6.200 2.500 10.300.8c4.200-1.500 8.200.3 8.900 3.700.7 2.300.3 5-.2 7-.3-2.300-1.200-4-2.600-4.700-3.200.6-6.200 2.300-8.500 6.400z" fill="#4f3422"/><path d="M8.500 3.500c2-2.200 5.500-2.800 8-1.200.8 1 .5 2-.5 2.300-2.500-.8-5-.5-7.200 1.200z" fill="#75502f"/><path d="M6.800 10.700h11.800v1H6.800z" fill="#3d3330"/><rect x="7.500" y="10.900" width="4.500" height="2.700" rx=".9" fill="#d5ab96" stroke="#3a3033" stroke-width=".8"/><rect x="13.700" y="10.900" width="4.500" height="2.700" rx=".9" fill="#d5ab96" stroke="#3a3033" stroke-width=".8"/><ellipse cx="12.800" cy="17" rx="1.500" ry=".6" fill="#d7707c"/></g></g><circle cx="14" cy="14" r="13.800" fill="none" stroke="#e9e6f3" stroke-width=".5"/></svg>
<div class="t" style="left:550.75px;top:842px;font-size:12.2px;color:#262a3d;letter-spacing:-0.03px;">@donaltrunk</div>
<svg class="a" style="left:625.700px;top:847.2px" width="11.400" height="10.600" viewBox="0 0 11.400 10.600"><path d="M.6 3.300V1.800A1.200 1.200 0 0 1 1.800.6h1.700M7.900.6h1.700a1.200 1.200 0 0 1 1.200 1.200v1.500M10.800 7.300v1.500a1.200 1.200 0 0 1-1.200 1.200H7.900M3.500 10H1.800A1.200 1.200 0 0 1 .6 8.800V7.300M0 5.300h11.400" fill="none" stroke="#616b8a" stroke-width="1.400"/></svg>
<div class="t" style="left:758.64px;top:842px;font-size:12.2px;color:#262a3d;letter-spacing:0.45px;">98.3</div>
<div class="t" style="left:887.09px;top:842px;font-size:12.2px;color:#262a3d;letter-spacing:0.55px;">98.3</div>
<div class="t" style="left:1009.84px;top:842px;font-size:12.2px;color:#262a3d;letter-spacing:0.32px;">98.3k</div>
<div class="a" style="left:628px;top:200px;width:490px;height:68.700px;border:4px solid #e84122"></div>
<div class="pb" style="left:794.400px;border-color:#eceef6"><svg class="a" style="left:8.300px;top:6px" width="5.500" height="9" viewBox="0 0 5.500 9"><path d="M4.700.6L.9 4.500l3.800 3.900" fill="none" stroke="#cfd3e4" stroke-width="1"/></svg></div>
<div class="pb" style="left:824.4px;border-color:#6a60ee"></div>
<div class="t" style="left:831.93px;top:896px;font-size:12.4px;color:#4f46e5;-webkit-text-stroke:0.2px #4f46e5;">1</div>
<div class="pb" style="left:853.7px;border-color:#e6e8f2"></div>
<div class="t" style="left:861.4px;top:896px;font-size:12.4px;color:#2c3045;">2</div>
<div class="pb" style="left:883px;border-color:#e6e8f2"></div>
<div class="t" style="left:890.73px;top:896px;font-size:12.4px;color:#2c3045;">3</div>
<div class="pb" style="left:912.5px;border-color:#e6e8f2"></div>
<div class="t" style="left:920.25px;top:896px;font-size:12.4px;color:#2c3045;">4</div>
<div class="pb" style="left:942px;border-color:#e6e8f2"></div>
<div class="t" style="left:949.71px;top:896px;font-size:12.4px;color:#2c3045;">5</div>
<div class="pb" style="left:971.500px"><svg class="a" style="left:8.800px;top:6px" width="5.500" height="9" viewBox="0 0 5.500 9"><path d="M.8.600l3.800 3.900L.8 8.400" fill="none" stroke="#555d75" stroke-width="1"/></svg></div>
<div class="pb" style="left:1001.200px;width:108.600px"></div>
<div class="t" style="left:1008.75px;top:896px;font-size:12.2px;color:#3b4058;letter-spacing:-0.16px;">View 10 Items</div>
<svg class="a" style="left:1089px;top:902.900px" width="9" height="6" viewBox="0 0 9 6"><path d="M.5.700l4 4 4-4" fill="none" stroke="#555d75" stroke-width="1"/></svg>
<div class="a" style="left:226.500px;top:930.500px;width:712.500px;height:3.300px;background:#dde1f1;border-radius:2px"></div>
</body>
</html>
